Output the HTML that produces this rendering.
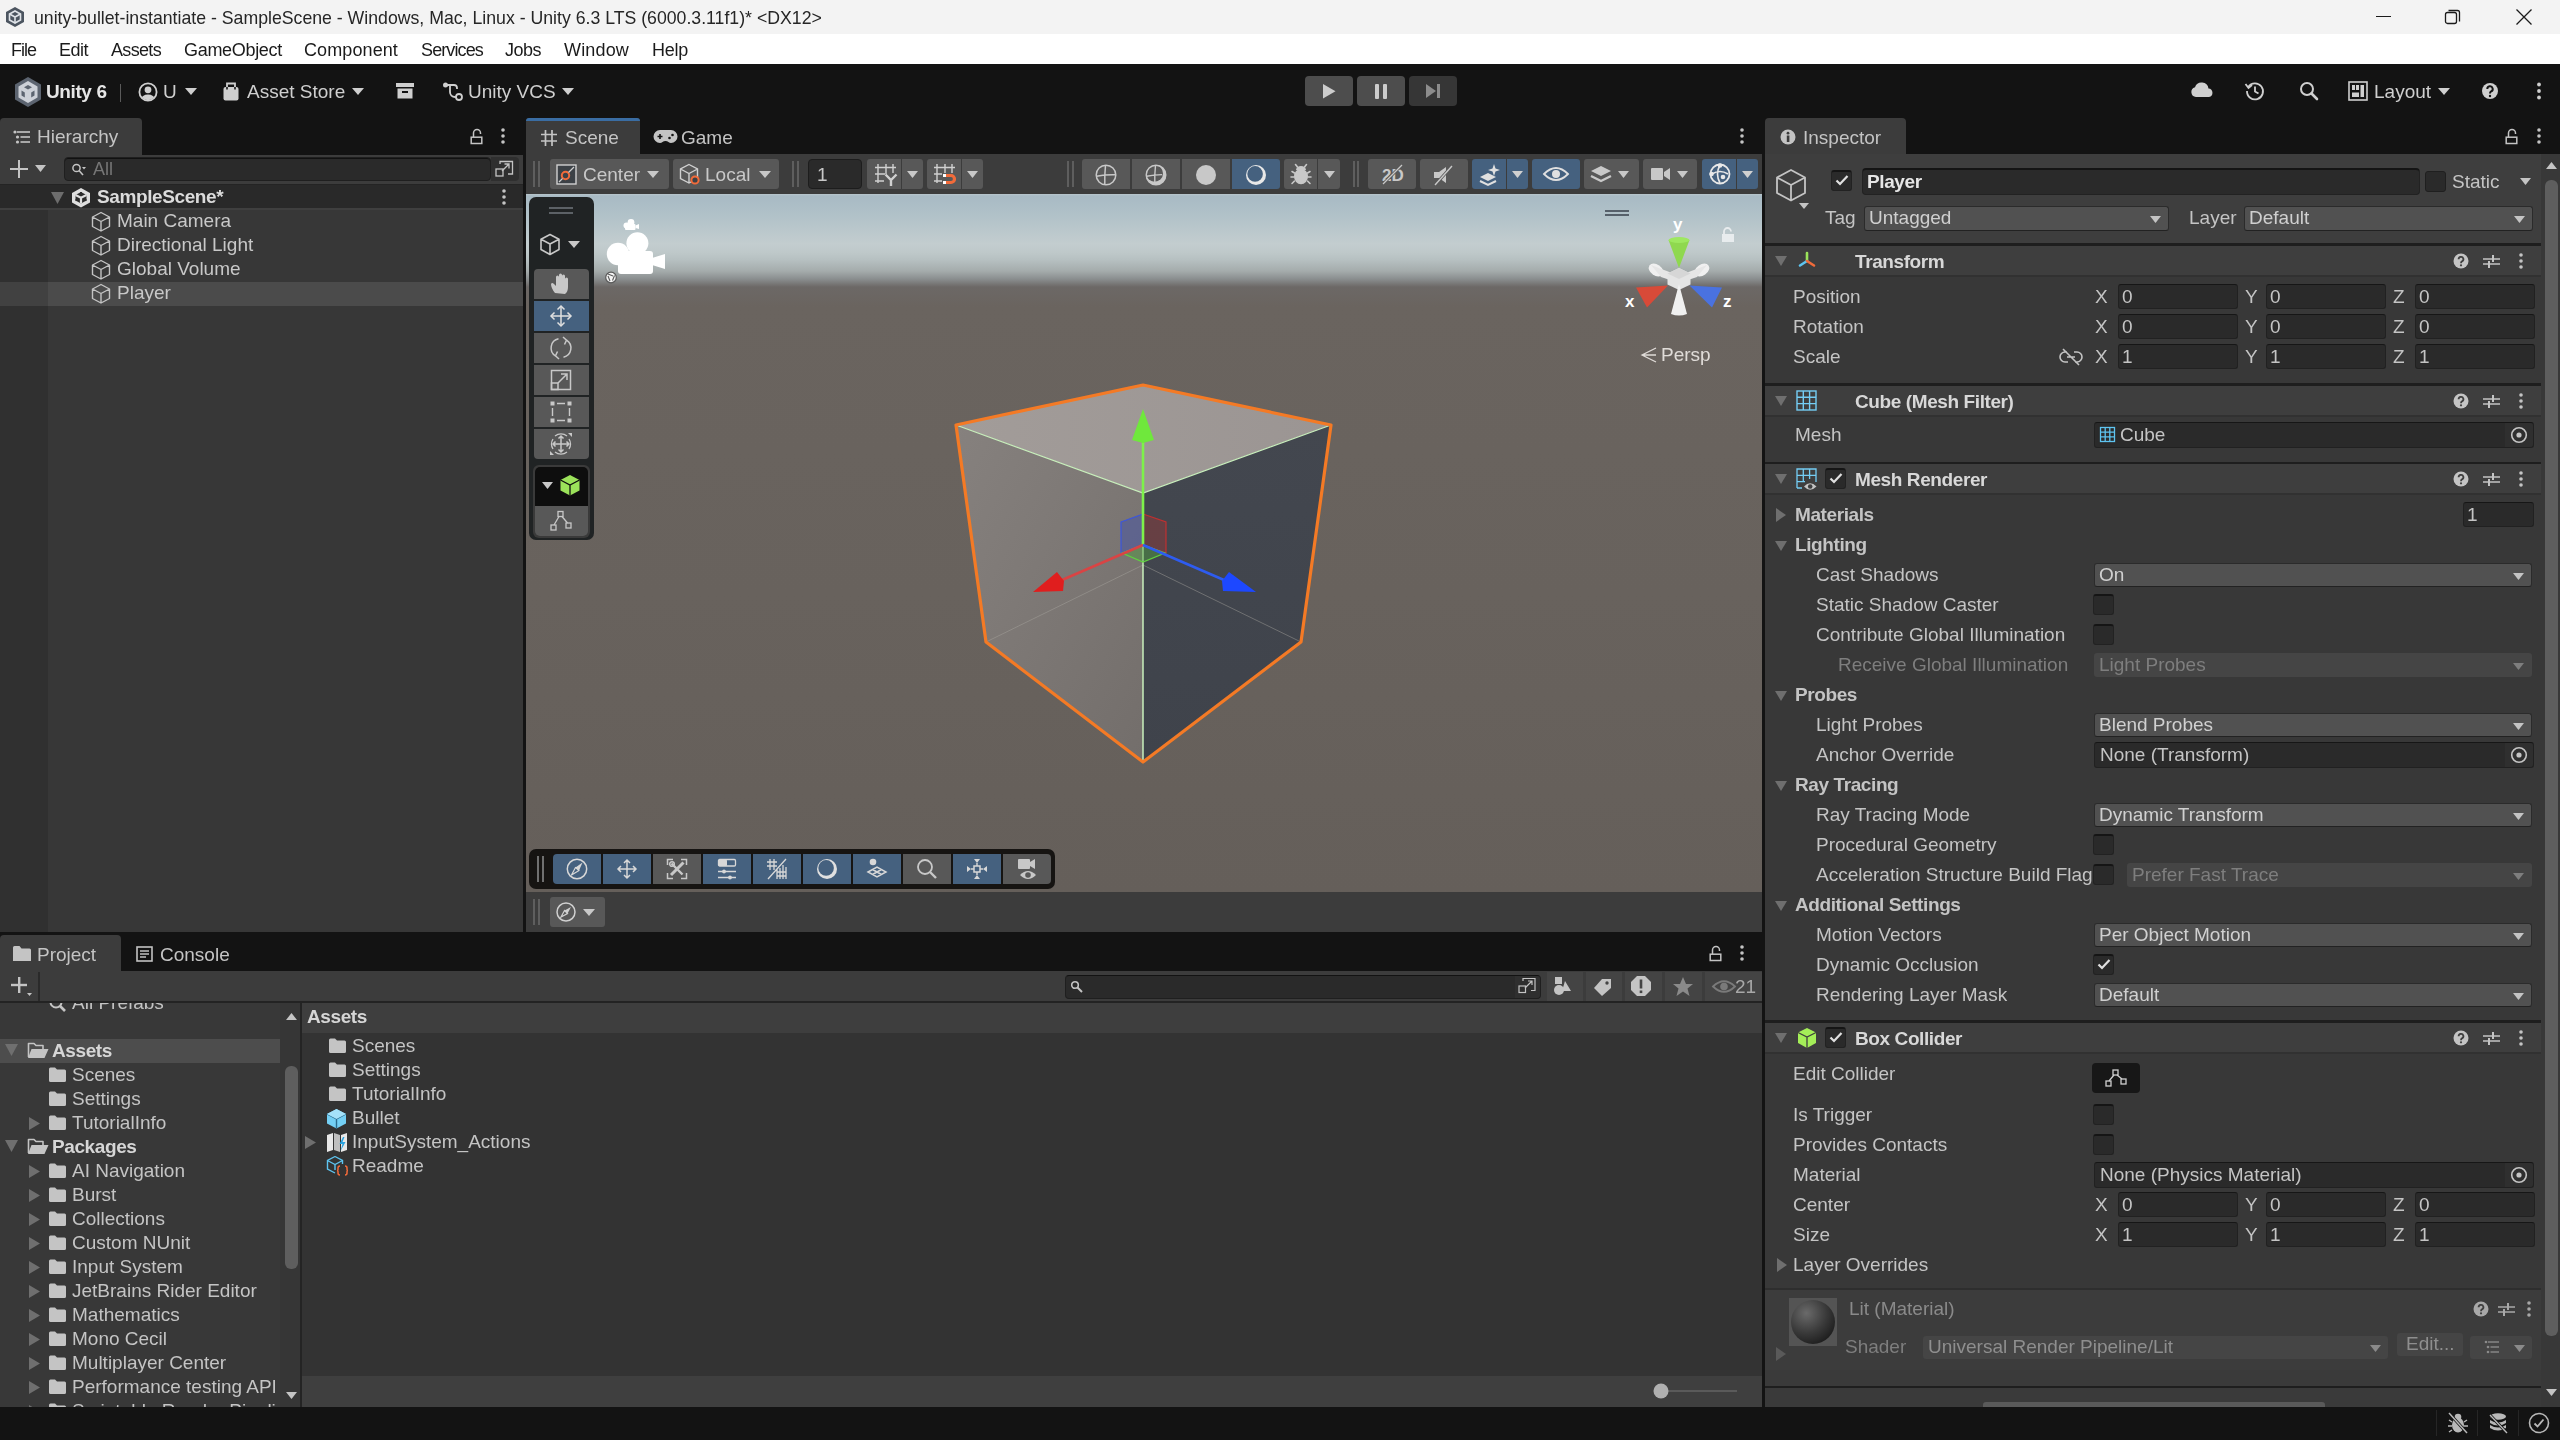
<!DOCTYPE html>
<html><head><meta charset="utf-8"><style>
html,body{margin:0;padding:0;width:2560px;height:1440px;overflow:hidden;background:#131313;}
body{position:relative;font-family:"Liberation Sans", sans-serif;}
.t{position:absolute;white-space:nowrap;will-change:transform;}
svg{overflow:visible}
</style></head><body>
<div style="position:absolute;left:0px;top:0px;width:2560px;height:34px;background:#f3f3f3;"></div>
<svg style="position:absolute;left:4px;top:6px;" width="22" height="22" viewBox="0 0 22 22"><path d="M11 1 L20 6 L20 16 L11 21 L2 16 L2 6 Z" fill="#4c5560"/><path d="M11 5 L16.5 8 L16.5 14 L11 17 L5.5 14 L5.5 8 Z" fill="none" stroke="#dfe3e8" stroke-width="1.6"/><path d="M11 11 L11 17 M11 11 L5.5 8 M11 11 L16.5 8" stroke="#dfe3e8" stroke-width="1.6"/></svg>
<div class="t" style="left:34px;top:6.0px;font-size:17.7px;line-height:24px;color:#262626;">unity-bullet-instantiate - SampleScene - Windows, Mac, Linux - Unity 6.3 LTS (6000.3.11f1)* &lt;DX12&gt;</div>
<div style="position:absolute;left:2376px;top:16px;width:15px;height:1px;background:#1b1b1b;"></div>
<svg style="position:absolute;left:2444px;top:8px;" width="18" height="18" viewBox="0 0 18 18"><rect x="1.5" y="4.5" width="11" height="11" rx="2" fill="none" stroke="#1b1b1b" stroke-width="1.3"/><path d="M4.5 2.5 H13.5 a2 2 0 0 1 2 2 V13.5" fill="none" stroke="#1b1b1b" stroke-width="1.3"/></svg>
<svg style="position:absolute;left:2515px;top:8px;" width="18" height="18" viewBox="0 0 18 18"><path d="M1.5 1.5 L16.5 16.5 M16.5 1.5 L1.5 16.5" stroke="#1b1b1b" stroke-width="1.3"/></svg>
<div style="position:absolute;left:0px;top:34px;width:2560px;height:30px;background:#ffffff;"></div>
<div class="t" style="left:11px;top:38.0px;font-size:18px;line-height:24px;color:#1b1b1b;letter-spacing:-1.00px">File</div>
<div class="t" style="left:59px;top:38.0px;font-size:18px;line-height:24px;color:#1b1b1b;letter-spacing:-0.50px">Edit</div>
<div class="t" style="left:111px;top:38.0px;font-size:18px;line-height:24px;color:#1b1b1b;letter-spacing:-0.67px">Assets</div>
<div class="t" style="left:184px;top:38.0px;font-size:18px;line-height:24px;color:#1b1b1b;letter-spacing:-0.31px">GameObject</div>
<div class="t" style="left:304px;top:38.0px;font-size:18px;line-height:24px;color:#1b1b1b;letter-spacing:0.10px">Component</div>
<div class="t" style="left:421px;top:38.0px;font-size:18px;line-height:24px;color:#1b1b1b;letter-spacing:-0.88px">Services</div>
<div class="t" style="left:505px;top:38.0px;font-size:18px;line-height:24px;color:#1b1b1b;letter-spacing:-0.51px">Jobs</div>
<div class="t" style="left:564px;top:38.0px;font-size:18px;line-height:24px;color:#1b1b1b;letter-spacing:0.16px">Window</div>
<div class="t" style="left:652px;top:38.0px;font-size:18px;line-height:24px;color:#1b1b1b;letter-spacing:-0.26px">Help</div>
<div style="position:absolute;left:0px;top:64px;width:2560px;height:54px;background:#131313;"></div>
<svg style="position:absolute;left:13px;top:76px;" width="30" height="32" viewBox="0 0 30 32"><path d="M15 1 L28 8.5 L28 23.5 L15 31 L2 23.5 L2 8.5 Z" fill="#5c6470"/><path d="M15 5 L24.5 10.5 L24.5 21.5 L15 27 L5.5 21.5 L5.5 10.5 Z" fill="#cdd1d8"/><polygon points="15,9 19,11.3 15,13.6 11,11.3" fill="#5c6470"/><polygon points="8.5,14.5 11.8,16.4 11.8,21.5 8.5,19.6" fill="#5c6470"/><polygon points="21.5,14.5 18.2,16.4 18.2,21.5 21.5,19.6" fill="#5c6470"/></svg>
<div class="t" style="left:46px;top:80.0px;font-size:19px;line-height:24px;color:#e6e6e6;font-weight:bold;letter-spacing:-0.4px;">Unity 6</div>
<div style="position:absolute;left:120px;top:84px;width:1px;height:18px;background:#5a5a5a;"></div>
<svg style="position:absolute;left:138px;top:82px;" width="20" height="20" viewBox="0 0 20 20"><defs><clipPath id="acc"><circle cx="10" cy="10" r="8.2"/></clipPath></defs><circle cx="10" cy="10" r="8.6" fill="none" stroke="#cfcfcf" stroke-width="1.8"/><circle cx="10" cy="7.8" r="3.4" fill="#cfcfcf"/><ellipse cx="10" cy="17.5" rx="7" ry="5" fill="#cfcfcf" clip-path="url(#acc)"/></svg>
<div class="t" style="left:163px;top:80.0px;font-size:19px;line-height:24px;color:#cfcfcf;">U</div>
<svg style="position:absolute;left:185.0px;top:87.5px;" width="12" height="7" viewBox="0 0 12 7"><path d="M0 0 L12 0 L6.0 7 Z" fill="#cfcfcf"/></svg>
<svg style="position:absolute;left:222px;top:81px;" width="18" height="20" viewBox="0 0 18 20"><path d="M5 8 V2.5 H13 V8" fill="none" stroke="#cfcfcf" stroke-width="1.8"/><rect x="1.5" y="6" width="15" height="13.5" rx="2" fill="#cfcfcf"/><rect x="4.2" y="6" width="1.6" height="2.5" fill="#131313"/><rect x="12.2" y="6" width="1.6" height="2.5" fill="#131313"/></svg>
<div class="t" style="left:247px;top:80.0px;font-size:19px;line-height:24px;color:#cfcfcf;">Asset Store</div>
<svg style="position:absolute;left:352.0px;top:87.5px;" width="12" height="7" viewBox="0 0 12 7"><path d="M0 0 L12 0 L6.0 7 Z" fill="#cfcfcf"/></svg>
<svg style="position:absolute;left:396px;top:83px;" width="18" height="16" viewBox="0 0 18 16"><rect x="0" y="0" width="18" height="4" fill="#cfcfcf"/><path d="M1.5 5.5 H16.5 V15.5 H1.5 Z" fill="#cfcfcf"/><rect x="6" y="8" width="6" height="2" fill="#131313"/></svg>
<svg style="position:absolute;left:442px;top:81px;" width="22" height="20" viewBox="0 0 22 20"><circle cx="3.5" cy="4" r="2.5" fill="#cfcfcf"/><circle cx="17" cy="16" r="3" fill="none" stroke="#cfcfcf" stroke-width="1.8"/><path d="M3.5 4 H12 M8 4 V11 a5 5 0 0 0 5 5 H14 M12 4 a3 3 0 0 1 3 3 V8" fill="none" stroke="#cfcfcf" stroke-width="1.8"/></svg>
<div class="t" style="left:468px;top:80.0px;font-size:19px;line-height:24px;color:#cfcfcf;">Unity VCS</div>
<svg style="position:absolute;left:562.0px;top:87.5px;" width="12" height="7" viewBox="0 0 12 7"><path d="M0 0 L12 0 L6.0 7 Z" fill="#cfcfcf"/></svg>
<div style="position:absolute;left:1305px;top:76px;width:48px;height:30px;background:#4d4d4d;border-radius:4px"></div>
<svg style="position:absolute;left:1323px;top:84px;" width="13" height="15" viewBox="0 0 13 15"><path d="M0 0 L12.5 7.3 L0 14.6 Z" fill="#cccccc"/></svg>
<div style="position:absolute;left:1357px;top:76px;width:48px;height:30px;background:#4d4d4d;border-radius:4px"></div>
<div style="position:absolute;left:1375px;top:84px;width:4.3px;height:14.5px;background:#cccccc;border-radius:1px"></div>
<div style="position:absolute;left:1383px;top:84px;width:4.3px;height:14.5px;background:#cccccc;border-radius:1px"></div>
<div style="position:absolute;left:1409px;top:76px;width:48px;height:30px;background:#363636;border-radius:4px"></div>
<svg style="position:absolute;left:1425px;top:83px;" width="16" height="16" viewBox="0 0 16 16"><path d="M1 1 L11 8 L1 15 Z" fill="#8c8c8c"/><rect x="12" y="1" width="3" height="14" fill="#8c8c8c"/></svg>
<svg style="position:absolute;left:2190px;top:82px;" width="24" height="16" viewBox="0 0 24 16"><path d="M6 15 a5 5 0 0 1 -1 -9.8 a7 7 0 0 1 13.5 1.3 a4.3 4.3 0 0 1 0.5 8.5 Z" fill="#cfcfcf"/></svg>
<svg style="position:absolute;left:2245px;top:81px;" width="20" height="20" viewBox="0 0 20 20"><path d="M3.3 6 A8 8 0 1 1 2 10" fill="none" stroke="#cfcfcf" stroke-width="1.8"/><path d="M0.5 3 L3.5 7 L7 4" fill="none" stroke="#cfcfcf" stroke-width="1.8"/><path d="M10 5.5 V10.5 L13.5 12.5" fill="none" stroke="#cfcfcf" stroke-width="1.8"/></svg>
<svg style="position:absolute;left:2299px;top:81px;" width="20" height="20" viewBox="0 0 20 20"><circle cx="8" cy="8" r="6" fill="none" stroke="#cfcfcf" stroke-width="2"/><path d="M12.5 12.5 L18 18" stroke="#cfcfcf" stroke-width="2.6" stroke-linecap="round"/></svg>
<svg style="position:absolute;left:2348px;top:81px;" width="20" height="20" viewBox="0 0 20 20"><rect x="1" y="1" width="18" height="18" fill="none" stroke="#cfcfcf" stroke-width="1.6"/><rect x="4" y="4" width="3" height="5" fill="#cfcfcf"/><rect x="8" y="4" width="3" height="5" fill="#cfcfcf"/><rect x="12.5" y="4" width="3.5" height="12" fill="#cfcfcf"/><rect x="4" y="11.5" width="7" height="4.5" fill="#cfcfcf"/></svg>
<div class="t" style="left:2374px;top:80.0px;font-size:19px;line-height:24px;color:#cfcfcf;">Layout</div>
<svg style="position:absolute;left:2438.0px;top:87.5px;" width="12" height="7" viewBox="0 0 12 7"><path d="M0 0 L12 0 L6.0 7 Z" fill="#cfcfcf"/></svg>
<svg style="position:absolute;left:2481px;top:82px;" width="18" height="18" viewBox="0 0 18 18"><circle cx="9" cy="9" r="8" fill="#cfcfcf"/><path d="M6.3 7 a2.7 2.7 0 1 1 3.8 2.4 c-0.9 0.5 -1.1 1 -1.1 2" fill="none" stroke="#131313" stroke-width="2"/><circle cx="9" cy="14" r="1.2" fill="#131313"/></svg>
<svg style="position:absolute;left:2535px;top:79px;" width="8" height="24" viewBox="0 0 8 24"><circle cx="4" cy="5.5" r="1.9" fill="#cfcfcf"/><circle cx="4" cy="12" r="1.9" fill="#cfcfcf"/><circle cx="4" cy="18.5" r="1.9" fill="#cfcfcf"/></svg>
<div style="position:absolute;left:0px;top:118px;width:2560px;height:37px;background:#131313;"></div>
<div style="position:absolute;left:0px;top:118px;width:142px;height:37px;background:#3c3c3c;border-radius:4px 4px 0 0"></div>
<svg style="position:absolute;left:13px;top:130px;" width="18" height="14" viewBox="0 0 18 14"><circle cx="2" cy="2" r="1.6" fill="#c4c4c4"/><circle cx="4.5" cy="7" r="1.6" fill="#c4c4c4"/><circle cx="4.5" cy="12" r="1.6" fill="#c4c4c4"/><rect x="4" y="1.2" width="13" height="1.6" fill="#c4c4c4"/><rect x="7.5" y="6.2" width="9.5" height="1.6" fill="#c4c4c4"/><rect x="7.5" y="11.2" width="9.5" height="1.6" fill="#c4c4c4"/></svg>
<div class="t" style="left:37px;top:125.0px;font-size:19px;line-height:24px;color:#c4c4c4;">Hierarchy</div>
<svg style="position:absolute;left:469px;top:128px;" width="16" height="17" viewBox="0 0 16 17"><path d="M4.5 9 V5 a3.5 3.5 0 0 1 7 0 V6" fill="none" stroke="#c4c4c4" stroke-width="1.5"/><rect x="2.2" y="9.2" width="10.6" height="6.3" fill="none" stroke="#c4c4c4" stroke-width="1.5"/></svg>
<svg style="position:absolute;left:499px;top:124px;" width="8" height="24" viewBox="0 0 8 24"><circle cx="4" cy="6" r="1.8" fill="#c4c4c4"/><circle cx="4" cy="12" r="1.8" fill="#c4c4c4"/><circle cx="4" cy="18" r="1.8" fill="#c4c4c4"/></svg>
<div style="position:absolute;left:0px;top:155px;width:523px;height:777px;background:#373737;"></div>
<div style="position:absolute;left:0px;top:210px;width:48px;height:722px;background:#303030;"></div>
<div style="position:absolute;left:0px;top:155px;width:523px;height:29px;background:#3c3c3c;"></div>
<div style="position:absolute;left:0px;top:184px;width:523px;height:1px;background:#242424;"></div>
<svg style="position:absolute;left:9px;top:159px;" width="20" height="20" viewBox="0 0 20 20"><rect x="9" y="1" width="2" height="18" fill="#c4c4c4"/><rect x="1" y="9" width="18" height="2" fill="#c4c4c4"/></svg>
<svg style="position:absolute;left:34.5px;top:164.5px;" width="11" height="7" viewBox="0 0 11 7"><path d="M0 0 L11 0 L5.5 7 Z" fill="#c4c4c4"/></svg>
<div style="position:absolute;left:64px;top:157px;width:427px;height:24px;background:#2a2a2a;border-radius:4px;box-shadow:inset 0 1px 0 #111;border:1px solid #1f1f1f;box-sizing:border-box"></div>
<svg style="position:absolute;left:71px;top:162px;" width="16" height="16" viewBox="0 0 16 16"><circle cx="5.5" cy="6" r="3.6" fill="none" stroke="#c4c4c4" stroke-width="1.5"/><path d="M8 8.5 L12 13" stroke="#c4c4c4" stroke-width="1.6"/><path d="M11 5 L15 5 L13 7.5 Z" fill="#c4c4c4"/></svg>
<div class="t" style="left:93px;top:157.0px;font-size:18px;line-height:24px;color:#767676;">All</div>
<div style="position:absolute;left:491px;top:157px;width:28px;height:24px;background:#2f2f2f;border-radius:0 4px 4px 0"></div>
<svg style="position:absolute;left:495px;top:160px;" width="20" height="18" viewBox="0 0 20 18"><rect x="1" y="9" width="7" height="7" fill="none" stroke="#c4c4c4" stroke-width="1.3"/><path d="M5 4 V1.5 H17.5 V14 H13" fill="none" stroke="#c4c4c4" stroke-width="1.3"/><path d="M7 11 L14 4 M9.5 4 H14 V8.5" fill="none" stroke="#c4c4c4" stroke-width="1.3"/></svg>
<div style="position:absolute;left:0px;top:185px;width:523px;height:23px;background:#292929;"></div>
<div style="position:absolute;left:0px;top:208px;width:523px;height:2px;background:#3f3f3f;"></div>
<svg style="position:absolute;left:51px;top:192px;" width="13" height="12" viewBox="0 0 13 12"><path d="M0 0 H13 L6.5 12 Z" fill="#6d6d6d"/></svg>
<svg style="position:absolute;left:71px;top:187px;" width="20" height="21" viewBox="0 0 20 21"><path d="M10 1 L19 6 L19 15.5 L10 20.5 L1 15.5 L1 6 Z" fill="#e0e0e0"/><path d="M10 5 L15.5 8 L15.5 13.5 L10 16.5 L4.5 13.5 L4.5 8 Z" fill="#2d2d2d"/><path d="M10 10.7 V16.5 M10 10.7 L4.5 8 M10 10.7 L15.5 8" stroke="#e0e0e0" stroke-width="2.2"/><path d="M10 5 V8.5 M4.5 13.5 L7.5 11.8 M15.5 13.5 L12.5 11.8" stroke="#2d2d2d" stroke-width="2"/></svg>
<div class="t" style="left:97px;top:185.0px;font-size:19px;line-height:24px;color:#dcdcdc;font-weight:bold;letter-spacing:-0.4px;">SampleScene*</div>
<svg style="position:absolute;left:500px;top:185px;" width="8" height="24" viewBox="0 0 8 24"><circle cx="4" cy="6" r="1.8" fill="#c4c4c4"/><circle cx="4" cy="12" r="1.8" fill="#c4c4c4"/><circle cx="4" cy="18" r="1.8" fill="#c4c4c4"/></svg>
<div style="position:absolute;left:0px;top:282px;width:48px;height:24px;background:#414141;"></div>
<div style="position:absolute;left:48px;top:282px;width:475px;height:24px;background:#4b4b4b;"></div>
<svg style="position:absolute;left:91px;top:211px;" width="20" height="22" viewBox="0 0 20 22"><path d="M10 1.5 L18.5 6 L18.5 15.5 L10 20 L1.5 15.5 L1.5 6 Z M1.5 6 L10 10.5 L18.5 6 M10 10.5 L10 20" fill="none" stroke="#c4c4c4" stroke-width="1.4" stroke-linejoin="round"/></svg>
<div class="t" style="left:117px;top:209.0px;font-size:19px;line-height:24px;color:#c8c8c8;">Main Camera</div>
<svg style="position:absolute;left:91px;top:235px;" width="20" height="22" viewBox="0 0 20 22"><path d="M10 1.5 L18.5 6 L18.5 15.5 L10 20 L1.5 15.5 L1.5 6 Z M1.5 6 L10 10.5 L18.5 6 M10 10.5 L10 20" fill="none" stroke="#c4c4c4" stroke-width="1.4" stroke-linejoin="round"/></svg>
<div class="t" style="left:117px;top:233.0px;font-size:19px;line-height:24px;color:#c8c8c8;">Directional Light</div>
<svg style="position:absolute;left:91px;top:259px;" width="20" height="22" viewBox="0 0 20 22"><path d="M10 1.5 L18.5 6 L18.5 15.5 L10 20 L1.5 15.5 L1.5 6 Z M1.5 6 L10 10.5 L18.5 6 M10 10.5 L10 20" fill="none" stroke="#c4c4c4" stroke-width="1.4" stroke-linejoin="round"/></svg>
<div class="t" style="left:117px;top:257.0px;font-size:19px;line-height:24px;color:#c8c8c8;">Global Volume</div>
<svg style="position:absolute;left:91px;top:283px;" width="20" height="22" viewBox="0 0 20 22"><path d="M10 1.5 L18.5 6 L18.5 15.5 L10 20 L1.5 15.5 L1.5 6 Z M1.5 6 L10 10.5 L18.5 6 M10 10.5 L10 20" fill="none" stroke="#c4c4c4" stroke-width="1.4" stroke-linejoin="round"/></svg>
<div class="t" style="left:117px;top:281.0px;font-size:19px;line-height:24px;color:#c8c8c8;">Player</div>
<div style="position:absolute;left:526px;top:118px;width:114px;height:36px;background:#3c3c3c;border-radius:4px 4px 0 0"></div>
<div style="position:absolute;left:526px;top:118px;width:114px;height:3px;background:#3a6da3;border-radius:4px 4px 0 0"></div>
<svg style="position:absolute;left:540px;top:129px;" width="18" height="18" viewBox="0 0 18 18"><path d="M5.5 1 V17 M12 1 V17 M1 5.5 H17 M1 12 H17" stroke="#c4c4c4" stroke-width="1.7"/></svg>
<div class="t" style="left:565px;top:126.0px;font-size:19px;line-height:24px;color:#c4c4c4;">Scene</div>
<svg style="position:absolute;left:654px;top:129px;" width="23" height="15" viewBox="0 0 23 15"><path d="M6 1 H17 a5.5 5.5 0 0 1 0 13 c-2 0 -3 -2 -5.5 -2 c-2.5 0 -3.5 2 -5.5 2 a5.5 5.5 0 0 1 0 -13 Z" fill="#c4c4c4"/><path d="M3.5 7.5 H8.5 M6 5 V10" stroke="#131313" stroke-width="1.6"/><circle cx="15.5" cy="9" r="1.3" fill="#131313"/><circle cx="18.5" cy="6" r="1.3" fill="#131313"/></svg>
<div class="t" style="left:681px;top:126.0px;font-size:19px;line-height:24px;color:#c4c4c4;">Game</div>
<svg style="position:absolute;left:1738px;top:124px;" width="8" height="24" viewBox="0 0 8 24"><circle cx="4" cy="6" r="1.8" fill="#c4c4c4"/><circle cx="4" cy="12" r="1.8" fill="#c4c4c4"/><circle cx="4" cy="18" r="1.8" fill="#c4c4c4"/></svg>
<div style="position:absolute;left:526px;top:154px;width:1236px;height:778px;background:#3c3c3c;"></div>
<div style="position:absolute;left:523px;top:118px;width:3px;height:814px;background:#131313;"></div>
<div style="position:absolute;left:1762px;top:118px;width:3px;height:814px;background:#131313;"></div>
<div style="position:absolute;left:533px;top:161px;width:1.5px;height:26px;background:#5e5e5e;"></div>
<div style="position:absolute;left:538px;top:161px;width:1.5px;height:26px;background:#5e5e5e;"></div>
<div style="position:absolute;left:550px;top:159px;width:119px;height:30px;background:#585858;border-radius:3px"></div>
<svg style="position:absolute;left:556px;top:164px;" width="21" height="21" viewBox="0 0 21 21"><rect x="1" y="1" width="19" height="19" fill="#3c4146" stroke="#d0d0d0" stroke-width="1.4"/><circle cx="9.5" cy="11.5" r="3.7" fill="none" stroke="#f26b3a" stroke-width="2"/><path d="M3 18 L6.5 14.5 M12.5 8.5 L18 3" stroke="#d0d0d0" stroke-width="1.3"/></svg>
<div class="t" style="left:583px;top:163.0px;font-size:19px;line-height:24px;color:#c8c8c8;">Center</div>
<svg style="position:absolute;left:647.0px;top:170.5px;" width="12" height="7" viewBox="0 0 12 7"><path d="M0 0 L12 0 L6.0 7 Z" fill="#c8c8c8"/></svg>
<div style="position:absolute;left:673px;top:159px;width:106px;height:30px;background:#585858;border-radius:3px"></div>
<svg style="position:absolute;left:679px;top:163px;" width="22" height="22" viewBox="0 0 22 22"><path d="M10 1.5 L18.5 6 L18.5 15.5 L10 20 L1.5 15.5 L1.5 6 Z M1.5 6 L10 10.5 L18.5 6 M10 10.5 L10 20" fill="none" stroke="#d0d0d0" stroke-width="1.4"/><circle cx="16" cy="17" r="3.6" fill="#3c4146" stroke="#f26b3a" stroke-width="2"/></svg>
<div class="t" style="left:705px;top:163.0px;font-size:19px;line-height:24px;color:#c8c8c8;">Local</div>
<svg style="position:absolute;left:759.0px;top:170.5px;" width="12" height="7" viewBox="0 0 12 7"><path d="M0 0 L12 0 L6.0 7 Z" fill="#c8c8c8"/></svg>
<div style="position:absolute;left:792px;top:161px;width:1.5px;height:26px;background:#5e5e5e;"></div>
<div style="position:absolute;left:797px;top:161px;width:1.5px;height:26px;background:#5e5e5e;"></div>
<div style="position:absolute;left:808px;top:159px;width:54px;height:30px;background:#2a2a2a;border-radius:4px;border:1px solid #1d1d1d;box-sizing:border-box"></div>
<div class="t" style="left:817px;top:163.0px;font-size:19px;line-height:24px;color:#c8c8c8;">1</div>
<div style="position:absolute;left:867px;top:159px;width:34px;height:30px;background:#585858;border-radius:3px 0 0 3px"></div>
<div style="position:absolute;left:902px;top:159px;width:21px;height:30px;background:#585858;border-radius:0 3px 3px 0"></div>
<svg style="position:absolute;left:874px;top:164px;" width="24" height="22" viewBox="0 0 24 22"><path d="M4 0 V19 M12 0 V10 M19 0 V9 M1 3.5 H22 M1 10 H11 M1 17 H10" stroke="#d0d0d0" stroke-width="1.4"/><path d="M11.5 10.5 L17 16 L22.5 10.5 M17 16 V22" fill="none" stroke="#d0d0d0" stroke-width="2.4"/></svg>
<svg style="position:absolute;left:906.5px;top:170.5px;" width="11" height="7" viewBox="0 0 11 7"><path d="M0 0 L11 0 L5.5 7 Z" fill="#c8c8c8"/></svg>
<div style="position:absolute;left:927px;top:159px;width:34px;height:30px;background:#585858;border-radius:3px 0 0 3px"></div>
<div style="position:absolute;left:962px;top:159px;width:21px;height:30px;background:#585858;border-radius:0 3px 3px 0"></div>
<svg style="position:absolute;left:934px;top:164px;" width="24" height="22" viewBox="0 0 24 22"><path d="M3 0 V19 M11 0 V9 M18 0 V9 M0 3.5 H21 M0 10 H8 M0 17 H8" stroke="#d0d0d0" stroke-width="1.4"/><path d="M12 11.5 H17 a3.5 3.5 0 0 1 0 7 H12" fill="none" stroke="#f26b3a" stroke-width="3.2"/><rect x="9" y="10" width="3" height="3" fill="#fff"/><rect x="9" y="17" width="3" height="3" fill="#fff"/></svg>
<svg style="position:absolute;left:966.5px;top:170.5px;" width="11" height="7" viewBox="0 0 11 7"><path d="M0 0 L11 0 L5.5 7 Z" fill="#c8c8c8"/></svg>
<div style="position:absolute;left:1067px;top:161px;width:1.5px;height:26px;background:#5e5e5e;"></div>
<div style="position:absolute;left:1072px;top:161px;width:1.5px;height:26px;background:#5e5e5e;"></div>
<div style="position:absolute;left:1082px;top:159px;width:48px;height:30px;background:#585858;border-radius:3px 0 0 3px"></div>
<div style="position:absolute;left:1132px;top:159px;width:48px;height:30px;background:#585858;border-radius:0"></div>
<div style="position:absolute;left:1182px;top:159px;width:48px;height:30px;background:#585858;border-radius:0"></div>
<div style="position:absolute;left:1232px;top:159px;width:48px;height:30px;background:#45617f;border-radius:0 3px 3px 0"></div>
<svg style="position:absolute;left:1095px;top:164px;" width="22" height="22" viewBox="0 0 22 22"><circle cx="11" cy="11" r="9.8" fill="none" stroke="#c8c8c8" stroke-width="1.5"/><path d="M10.5 1.5 Q9.5 11 9.8 20.5 M1.5 12.2 Q11 10.5 20.5 10.8" fill="none" stroke="#c8c8c8" stroke-width="1.5"/></svg>
<svg style="position:absolute;left:1145px;top:164px;" width="22" height="22" viewBox="0 0 22 22"><circle cx="11" cy="11" r="10" fill="#c8c8c8"/><circle cx="9.6" cy="9.4" r="8.4" fill="#585858"/><circle cx="11" cy="11" r="9.8" fill="none" stroke="#c8c8c8" stroke-width="1.4"/><path d="M10.5 1.5 Q9.5 11 9.8 20 M1.5 12.2 Q9 11 17 10.6" fill="none" stroke="#c8c8c8" stroke-width="1.4"/></svg>
<svg style="position:absolute;left:1195px;top:164px;" width="22" height="22" viewBox="0 0 22 22"><circle cx="11" cy="11" r="10" fill="#c8c8c8"/></svg>
<svg style="position:absolute;left:1244px;top:163px;" width="24" height="24" viewBox="0 0 24 24"><circle cx="12" cy="12" r="10" fill="#e8e8e8"/><circle cx="11.1" cy="10.9" r="7.8" fill="#45617f"/></svg>
<div style="position:absolute;left:1284px;top:159px;width:33px;height:30px;background:#585858;border-radius:3px 0 0 3px"></div>
<div style="position:absolute;left:1318px;top:159px;width:22px;height:30px;background:#585858;border-radius:0 3px 3px 0"></div>
<svg style="position:absolute;left:1289px;top:163px;" width="24" height="22" viewBox="0 0 24 22"><ellipse cx="12" cy="13.5" rx="7" ry="7.8" fill="#c8c8c8"/><path d="M7 7 a5 4 0 0 1 10 0 Z" fill="#c8c8c8"/><path d="M8.5 4 L6.5 1.5 M15.5 4 L17.5 1.5 M5.5 10 L3 8.5 M18.5 10 L21 8.5 M5 14 H2 M19 14 H22 M5.5 18 L3 20.5 M18.5 18 L21 20.5" stroke="#c8c8c8" stroke-width="1.6" stroke-linecap="round"/></svg>
<svg style="position:absolute;left:1323.5px;top:170.5px;" width="11" height="7" viewBox="0 0 11 7"><path d="M0 0 L11 0 L5.5 7 Z" fill="#c8c8c8"/></svg>
<div style="position:absolute;left:1353px;top:161px;width:1.5px;height:26px;background:#5e5e5e;"></div>
<div style="position:absolute;left:1357px;top:161px;width:1.5px;height:26px;background:#5e5e5e;"></div>
<div style="position:absolute;left:1368px;top:159px;width:48px;height:30px;background:#585858;border-radius:3px"></div>
<div style="position:absolute;left:1420px;top:159px;width:48px;height:30px;background:#585858;border-radius:3px"></div>
<svg style="position:absolute;left:1381px;top:163px;" width="24" height="22" viewBox="0 0 24 22"><text x="1" y="18" font-family="Liberation Sans" font-size="17" font-weight="bold" fill="#c8c8c8">2D</text><path d="M2 21 L21 2" stroke="#585858" stroke-width="3"/><path d="M2 21 L21 2" stroke="#c8c8c8" stroke-width="1.3"/></svg>
<svg style="position:absolute;left:1432px;top:164px;" width="24" height="22" viewBox="0 0 24 22"><path d="M2 8 H7 L14 3 V19 L7 14 H2 Z" fill="#c8c8c8"/><path d="M3 21 L20 2" stroke="#585858" stroke-width="3"/><path d="M3 21 L20 2" stroke="#c8c8c8" stroke-width="1.4"/></svg>
<div style="position:absolute;left:1472px;top:159px;width:34px;height:30px;background:#45617f;border-radius:3px 0 0 3px"></div>
<div style="position:absolute;left:1507px;top:159px;width:21px;height:30px;background:#45617f;border-radius:0 3px 3px 0"></div>
<svg style="position:absolute;left:1479px;top:162px;" width="22" height="24" viewBox="0 0 22 24"><path d="M1 15 L9 11 L17 15 L9 19 Z" fill="#e0e0e0"/><path d="M1 19 L9 23 L17 19" fill="none" stroke="#e0e0e0" stroke-width="2"/><path d="M15 2 L16.5 6.5 L21 8 L16.5 9.5 L15 14 L13.5 9.5 L9 8 L13.5 6.5 Z" fill="#e0e0e0"/></svg>
<svg style="position:absolute;left:1511.5px;top:170.5px;" width="11" height="7" viewBox="0 0 11 7"><path d="M0 0 L11 0 L5.5 7 Z" fill="#d0d0d0"/></svg>
<div style="position:absolute;left:1532px;top:159px;width:48px;height:30px;background:#45617f;border-radius:3px"></div>
<svg style="position:absolute;left:1543px;top:166px;" width="26" height="16" viewBox="0 0 26 16"><path d="M1 8 Q13 -4 25 8 Q13 20 1 8 Z" fill="none" stroke="#e0e0e0" stroke-width="1.8"/><circle cx="13" cy="8" r="4" fill="#e0e0e0"/></svg>
<div style="position:absolute;left:1584px;top:159px;width:55px;height:30px;background:#585858;border-radius:3px"></div>
<svg style="position:absolute;left:1590px;top:165px;" width="22" height="18" viewBox="0 0 22 18"><path d="M1 6 L11 1 L21 6 L11 11 Z" fill="#c8c8c8"/><path d="M1 11 L11 16 L21 11" fill="none" stroke="#c8c8c8" stroke-width="2.4"/></svg>
<svg style="position:absolute;left:1617.5px;top:170.5px;" width="11" height="7" viewBox="0 0 11 7"><path d="M0 0 L11 0 L5.5 7 Z" fill="#c8c8c8"/></svg>
<div style="position:absolute;left:1643px;top:159px;width:54px;height:30px;background:#585858;border-radius:3px"></div>
<svg style="position:absolute;left:1650px;top:165px;" width="22" height="18" viewBox="0 0 22 18"><rect x="1" y="3" width="12" height="12" rx="1" fill="#c8c8c8"/><path d="M14 7 L20 3 V15 L14 11 Z" fill="#c8c8c8"/></svg>
<svg style="position:absolute;left:1676.5px;top:170.5px;" width="11" height="7" viewBox="0 0 11 7"><path d="M0 0 L11 0 L5.5 7 Z" fill="#c8c8c8"/></svg>
<div style="position:absolute;left:1702px;top:159px;width:34px;height:30px;background:#45617f;border-radius:3px 0 0 3px"></div>
<div style="position:absolute;left:1737px;top:159px;width:21px;height:30px;background:#45617f;border-radius:0 3px 3px 0"></div>
<svg style="position:absolute;left:1708px;top:162px;" width="24" height="24" viewBox="0 0 24 24"><circle cx="12" cy="12" r="9.5" fill="none" stroke="#e8e8e8" stroke-width="1.8"/><path d="M4 12 Q12 7 20 12 M12 3 Q7 12 12 21" fill="none" stroke="#e8e8e8" stroke-width="1.6"/><circle cx="12" cy="3.5" r="2.3" fill="#e8e8e8"/><circle cx="3.5" cy="12" r="2.3" fill="#e8e8e8"/><circle cx="15" cy="15" r="2.3" fill="#e8e8e8"/></svg>
<svg style="position:absolute;left:1741.5px;top:170.5px;" width="11" height="7" viewBox="0 0 11 7"><path d="M0 0 L11 0 L5.5 7 Z" fill="#d0d0d0"/></svg>
<div style="position:absolute;left:526px;top:194px;width:1236px;height:698px;background:linear-gradient(180deg,#b9c6cc 0px,#a8bac4 2px,#b0c1c8 20px,#c3cdcf 50px,#bfc9ca 58px,#b6c0c1 66px,#a5acac 77px,#8a8e8f 85px,#6c6866 93px,#6a645f 113px,#68625d 400px,#655f5a 698px);"></div>
<div style="position:absolute;left:526px;top:892px;width:1236px;height:40px;background:#3c3c3c;"></div>
<div style="position:absolute;left:533px;top:899px;width:1.5px;height:26px;background:#5e5e5e;"></div>
<div style="position:absolute;left:538px;top:899px;width:1.5px;height:26px;background:#5e5e5e;"></div>
<div style="position:absolute;left:550px;top:897px;width:55px;height:30px;background:#585858;border-radius:3px"></div>
<svg style="position:absolute;left:556px;top:902px;" width="20" height="20" viewBox="0 0 20 20"><circle cx="10" cy="10" r="9" fill="none" stroke="#d0d0d0" stroke-width="1.5"/><path d="M15 5 L11.5 11.5 L8.5 8.5 Z" fill="#d0d0d0"/><path d="M5 15 L8.5 8.5 L11.5 11.5 Z" fill="none" stroke="#d0d0d0" stroke-width="1.2"/></svg>
<svg style="position:absolute;left:583.0px;top:908.5px;" width="12" height="7" viewBox="0 0 12 7"><path d="M0 0 L12 0 L6.0 7 Z" fill="#c8c8c8"/></svg>
<svg style="position:absolute;left:526px;top:194px;" width="1236" height="698" viewBox="0 0 1236 698">
    <defs>
      <linearGradient id="lf" x1="0" y1="0" x2="1" y2="1"><stop offset="0" stop-color="#86817e"/><stop offset="1" stop-color="#736e6b"/></linearGradient>
      <linearGradient id="tf" x1="0" y1="0" x2="1" y2="0"><stop offset="0" stop-color="#a29c99"/><stop offset="1" stop-color="#9b9593"/></linearGradient>
      <linearGradient id="rf" x1="0" y1="0" x2="0" y2="1"><stop offset="0" stop-color="#43474f"/><stop offset="1" stop-color="#3f434b"/></linearGradient>
    </defs>
    <polygon points="617,191 805,231 617,299 430,231" fill="url(#tf)"/>
    <polygon points="430,231 617,299 617,568 460,448" fill="url(#lf)"/>
    <polygon points="617,299 805,231 775,448 617,568" fill="url(#rf)"/>
    <polyline points="460,448 617,371 775,448" fill="none" stroke="#a8a6a0" stroke-opacity="0.45" stroke-width="1"/>
    
    <polyline points="430,231 617,299 805,231" fill="none" stroke="#c9f0bd" stroke-width="1.2"/>
    <polyline points="617,299 617,568" fill="none" stroke="#c9f0bd" stroke-width="1.5"/>
    <polygon points="617,191 805,231 775,448 617,568 460,448 430,231" fill="none" stroke="#f47a25" stroke-width="3.2" stroke-linejoin="round"/>
    <!-- plane handles -->
    <polygon points="595,328 617,320 617,351 595,359" fill="#3d4fb0" fill-opacity="0.45" stroke="#3a55e0" stroke-width="1.2"/>
    <polygon points="617,320 640,328 640,359 617,351" fill="#a03838" fill-opacity="0.4" stroke="#c03030" stroke-width="1.2"/>
    <polygon points="596,359 617,351 639,359 617,368" fill="#50a040" fill-opacity="0.45" stroke="#60d040" stroke-width="1.2"/>
    <!-- axes -->
    <line x1="617" y1="351" x2="617" y2="246" stroke="#7df24a" stroke-width="2.6"/>
    <polygon points="617,215 628,246 617,249 606,246" fill="#6fe83c"/>
    <line x1="617" y1="351" x2="536" y2="386" stroke="#d94444" stroke-width="2.6"/>
    <polygon points="507,398 531,378 538,387 537,397" fill="#e01e1e"/>
    <line x1="617" y1="351" x2="698" y2="386" stroke="#2e5cf0" stroke-width="2.6"/>
    <polygon points="730,398 703,378 696,387 697,397" fill="#1d48ff"/>
    </svg>
<svg style="position:absolute;left:600px;top:212px;" width="72" height="76" viewBox="0 0 72 76">
      <g fill="#ffffff">
        <circle cx="31" cy="10.5" r="3.4"/><circle cx="26.5" cy="13.5" r="3"/><rect x="25" y="12" width="10.5" height="6" rx="1"/><path d="M35.5 13.5 L39 12 V17 L35.5 16 Z"/>
        <circle cx="18" cy="42" r="11.2"/><circle cx="37.4" cy="31.3" r="11"/>
        <rect x="18" y="39" width="35" height="23" rx="3"/>
        <path d="M52 46 L65 42 V57 L52 53 Z"/>
      </g>
      <circle cx="11" cy="65.5" r="5.3" fill="#f4f4f4" stroke="#5a5a5a" stroke-width="1.2"/>
      <path d="M8 62 L13 64 M14.5 63.5 L12.5 68.5 M10 69 L8 64" stroke="#5a5a5a" stroke-width="1.1" fill="none"/>
    </svg>
<div style="position:absolute;left:529px;top:197px;width:65px;height:343px;background:#202324;border-radius:7px"></div>
<div style="position:absolute;left:549px;top:207px;width:24px;height:2px;background:#5c6166;"></div>
<div style="position:absolute;left:549px;top:212px;width:24px;height:2px;background:#5c6166;"></div>
<svg style="position:absolute;left:539px;top:233px;" width="22" height="23" viewBox="0 0 22 23"><path d="M11 1.5 L20 6.3 L20 16.5 L11 21.5 L2 16.5 L2 6.3 Z M2 6.3 L11 11 L20 6.3 M11 11 V21.5" fill="none" stroke="#c8c8c8" stroke-width="1.6" stroke-linejoin="round"/></svg>
<svg style="position:absolute;left:568.0px;top:240.5px;" width="12" height="7" viewBox="0 0 12 7"><path d="M0 0 L12 0 L6.0 7 Z" fill="#c8c8c8"/></svg>
<div style="position:absolute;left:534px;top:269px;width:55px;height:30px;background:#585858;border-radius:4px 4px 0 0"></div>
<div style="position:absolute;left:534px;top:301px;width:55px;height:30px;background:#45617f;border-radius:0"></div>
<div style="position:absolute;left:534px;top:333px;width:55px;height:30px;background:#585858;border-radius:0"></div>
<div style="position:absolute;left:534px;top:365px;width:55px;height:30px;background:#585858;border-radius:0"></div>
<div style="position:absolute;left:534px;top:397px;width:55px;height:30px;background:#585858;border-radius:0"></div>
<div style="position:absolute;left:534px;top:429px;width:55px;height:30px;background:#585858;border-radius:0 0 4px 4px"></div>
<svg style="position:absolute;left:549px;top:272px;" width="24" height="24" viewBox="0 0 24 24"><path d="M6 21 Q2 16 2 12 Q3 10 5 12 L7 14 V5 a1.5 1.5 0 0 1 3 0 V11 V3 a1.5 1.5 0 0 1 3 0 V11 V4 a1.5 1.5 0 0 1 3 0 V12 V7 a1.5 1.5 0 0 1 3 0 V15 Q19 20 16 22 Z" fill="#c8c8c8"/></svg>
<svg style="position:absolute;left:549px;top:304px;" width="24" height="24" viewBox="0 0 24 24"><path d="M12 2 V22 M2 12 H22" stroke="#e0e0e0" stroke-width="1.5"/><path d="M8.5 5.5 L12 2 L15.5 5.5 M8.5 18.5 L12 22 L15.5 18.5 M5.5 8.5 L2 12 L5.5 15.5 M18.5 8.5 L22 12 L18.5 15.5" fill="none" stroke="#e0e0e0" stroke-width="1.5"/></svg>
<svg style="position:absolute;left:549px;top:336px;" width="24" height="24" viewBox="0 0 24 24"><path d="M9.5 2.8 A9.3 9.3 0 0 0 6.5 19.8 M14.5 21.2 A9.3 9.3 0 0 0 17.5 4.2" fill="none" stroke="#c8c8c8" stroke-width="1.5"/><path d="M14 1 L17.5 4.2 L15.5 8.5 M10 23 L6.5 19.8 L8.5 15.5" fill="none" stroke="#c8c8c8" stroke-width="1.5"/></svg>
<svg style="position:absolute;left:550px;top:369px;" width="22" height="22" viewBox="0 0 22 22"><rect x="1.5" y="1.5" width="19" height="19" fill="none" stroke="#c8c8c8" stroke-width="1.5"/><rect x="1.5" y="14" width="6.5" height="6.5" fill="none" stroke="#c8c8c8" stroke-width="1.5"/><path d="M8 14 L17 5 M11 5 H17 V11" fill="none" stroke="#c8c8c8" stroke-width="1.5"/></svg>
<svg style="position:absolute;left:550px;top:401px;" width="22" height="22" viewBox="0 0 22 22"><rect x="0.5" y="0.5" width="4" height="4" fill="#c8c8c8"/><rect x="17.5" y="0.5" width="4" height="4" fill="#c8c8c8"/><rect x="0.5" y="17.5" width="4" height="4" fill="#c8c8c8"/><rect x="17.5" y="17.5" width="4" height="4" fill="#c8c8c8"/><path d="M7 2.5 H15 M7 19.5 H15 M2.5 7 V15 M19.5 7 V15" stroke="#c8c8c8" stroke-width="1.4"/></svg>
<svg style="position:absolute;left:549px;top:432px;" width="24" height="24" viewBox="0 0 24 24"><path d="M12 4 V20 M4 12 H20 M9.5 6.5 L12 4 L14.5 6.5 M9.5 17.5 L12 20 L14.5 17.5 M6.5 9.5 L4 12 L6.5 14.5 M17.5 9.5 L20 12 L17.5 14.5" fill="none" stroke="#c8c8c8" stroke-width="1.5"/><path d="M6 4 A9.5 9.5 0 0 1 18 4 M20 7 A9.5 9.5 0 0 1 20 17 M18 20 A9.5 9.5 0 0 1 6 20 M4 17 A9.5 9.5 0 0 1 4 7" fill="none" stroke="#c8c8c8" stroke-width="1.3"/><path d="M19 1 L23 1 L23 5 Z M1 23 L1 19 L5 23 Z" fill="#c8c8c8"/></svg>
<div style="position:absolute;left:533px;top:465px;width:57px;height:73px;background:#3a3a3a;border-radius:6px"></div>
<div style="position:absolute;left:535px;top:467px;width:53px;height:39px;background:#0e0e0e;border-radius:5px 5px 0 0"></div>
<svg style="position:absolute;left:541.5px;top:481.5px;" width="11" height="7" viewBox="0 0 11 7"><path d="M0 0 L11 0 L5.5 7 Z" fill="#c8c8c8"/></svg>
<svg style="position:absolute;left:559px;top:474px;" width="22" height="22" viewBox="0 0 22 22"><path d="M11 1 L20.5 6 L20.5 16.5 L11 21.5 L1.5 16.5 L1.5 6 Z" fill="#9be25a"/><path d="M1.5 6 L11 11 L20.5 6 M11 11 V21.5" fill="none" stroke="#0e0e0e" stroke-width="1.3"/></svg>
<div style="position:absolute;left:535px;top:506px;width:53px;height:30px;background:#585858;border-radius:0 0 5px 5px"></div>
<svg style="position:absolute;left:549px;top:510px;" width="24" height="22" viewBox="0 0 24 22"><rect x="9" y="1.5" width="5" height="5" fill="none" stroke="#c8c8c8" stroke-width="1.3"/><rect x="2" y="15" width="5" height="5" fill="none" stroke="#c8c8c8" stroke-width="1.3"/><rect x="17" y="13" width="5" height="5" fill="none" stroke="#c8c8c8" stroke-width="1.3"/><path d="M5 15 L10 6.5 M13 6.5 L18.5 13" stroke="#c8c8c8" stroke-width="1.3"/></svg>
<div style="position:absolute;left:1605px;top:210px;width:24px;height:2px;background:#56606a;"></div>
<div style="position:absolute;left:1605px;top:214px;width:24px;height:2px;background:#56606a;"></div>
<svg style="position:absolute;left:1618px;top:218px;" width="120" height="110" viewBox="0 0 120 110">
      <text x="55" y="11.5" font-family="Liberation Sans" font-size="17" font-weight="bold" fill="#ffffff">y</text>
      <ellipse cx="38" cy="52" rx="5.5" ry="8" transform="rotate(-55 38 52)" fill="#f0f0f0"/>
      <polygon points="33,47 43,59 55,63 54,55" fill="#e6e6e6"/>
      <ellipse cx="84" cy="52" rx="5.5" ry="8" transform="rotate(55 84 52)" fill="#f0f0f0"/>
      <polygon points="89,47 79,59 67,63 68,55" fill="#e6e6e6"/>
      <polygon points="61,50 72.5,55.5 72.5,66.5 61,72 49.5,66.5 49.5,55.5" fill="#e4e4e4"/>
      <polygon points="49.5,55.5 61,50 72.5,55.5 61,61" fill="#d6d6d6"/>
      <polygon points="50.5,22 71.5,22 61,50" fill="#8fd84f"/>
      <ellipse cx="61" cy="22" rx="10.5" ry="3" fill="#9ee860"/>
      <path d="M53 96 Q61 99 69 96 L61 66 Z" fill="#f0f0f0"/>
      <polygon points="18,69.6 50,67.6 29,89.4" fill="#d84a38"/>
      <polygon points="71.5,67.6 104,69.6 94,89.4" fill="#4a72e0"/>
      <text x="7" y="88.5" font-family="Liberation Sans" font-size="17" font-weight="bold" fill="#ffffff">x</text>
      <text x="105" y="88.5" font-family="Liberation Sans" font-size="17" font-weight="bold" fill="#ffffff">z</text>
    </svg>
<svg style="position:absolute;left:1721px;top:227px;" width="14" height="16" viewBox="0 0 14 16"><path d="M3 7 V4.5 a3.5 3.5 0 0 1 7 0" fill="none" stroke="#e8ecee" stroke-width="1.8"/><rect x="1" y="7" width="12" height="8" fill="#e8ecee"/></svg>
<svg style="position:absolute;left:1640px;top:346px;" width="18" height="18" viewBox="0 0 18 18"><path d="M16 2 L2 9 L16 16 M2 9 H16" fill="none" stroke="#e0dcd8" stroke-width="1.3"/></svg>
<div class="t" style="left:1661px;top:343.0px;font-size:19px;line-height:24px;color:#e0dcd8;">Persp</div>
<div style="position:absolute;left:529px;top:849px;width:526px;height:40px;background:#161412;border-radius:7px"></div>
<div style="position:absolute;left:537px;top:856px;width:1.5px;height:26px;background:#707070;"></div>
<div style="position:absolute;left:542px;top:856px;width:1.5px;height:26px;background:#707070;"></div>
<div style="position:absolute;left:553px;top:854px;width:48px;height:30px;background:#45617f;border-radius:4px 0 0 4px"></div>
<div style="position:absolute;left:603px;top:854px;width:48px;height:30px;background:#45617f;border-radius:0"></div>
<div style="position:absolute;left:653px;top:854px;width:48px;height:30px;background:#585858;border-radius:0"></div>
<div style="position:absolute;left:703px;top:854px;width:48px;height:30px;background:#45617f;border-radius:0"></div>
<div style="position:absolute;left:753px;top:854px;width:48px;height:30px;background:#45617f;border-radius:0"></div>
<div style="position:absolute;left:803px;top:854px;width:48px;height:30px;background:#45617f;border-radius:0"></div>
<div style="position:absolute;left:853px;top:854px;width:48px;height:30px;background:#45617f;border-radius:0"></div>
<div style="position:absolute;left:903px;top:854px;width:48px;height:30px;background:#585858;border-radius:0"></div>
<div style="position:absolute;left:953px;top:854px;width:48px;height:30px;background:#45617f;border-radius:0"></div>
<div style="position:absolute;left:1003px;top:854px;width:48px;height:30px;background:#585858;border-radius:0 4px 4px 0"></div>
<svg style="position:absolute;left:566px;top:858px;" width="22" height="22" viewBox="0 0 22 22"><circle cx="11" cy="11" r="9.7" fill="none" stroke="#d8d8d8" stroke-width="1.5"/><polygon points="16.5,4.5 13,12.5 9.5,9.5" fill="#d8d8d8"/><polygon points="5.5,17 9.5,9.5 13,12.5" fill="none" stroke="#d8d8d8" stroke-width="1.2" stroke-linejoin="round"/></svg>
<svg style="position:absolute;left:616px;top:858px;" width="22" height="22" viewBox="0 0 22 22"><path d="M11 2 V20 M2 11 H20 M8 5 L11 2 L14 5 M8 17 L11 20 L14 17 M5 8 L2 11 L5 14 M17 8 L20 11 L17 14" fill="none" stroke="#d8d8d8" stroke-width="1.5"/></svg>
<svg style="position:absolute;left:666px;top:858px;" width="22" height="22" viewBox="0 0 22 22"><path d="M1.5 7 V1.5 H7 M15 1.5 H20.5 V7 M20.5 15 V20.5 H15 M7 20.5 H1.5 V15" fill="none" stroke="#c8c8c8" stroke-width="1.5"/><path d="M17.5 4.5 L5 17" stroke="#c8c8c8" stroke-width="3"/><path d="M5.5 5.5 L16.5 16.5" stroke="#c8c8c8" stroke-width="2.4"/><circle cx="6" cy="6" r="2.3" fill="none" stroke="#c8c8c8" stroke-width="1.5"/></svg>
<svg style="position:absolute;left:716px;top:858px;" width="22" height="22" viewBox="0 0 22 22"><rect x="2.5" y="1.5" width="17" height="6.5" rx="1.2" fill="none" stroke="#d8d8d8" stroke-width="1.3"/><rect x="2.5" y="1.5" width="8.5" height="6.5" rx="1" fill="#d8d8d8"/><path d="M2 13.5 H20 M2 19.5 H20" stroke="#d8d8d8" stroke-width="1.4"/><circle cx="8" cy="13.5" r="1.9" fill="#d8d8d8"/><circle cx="14" cy="19.5" r="1.9" fill="#d8d8d8"/></svg>
<svg style="position:absolute;left:766px;top:858px;" width="22" height="22" viewBox="0 0 22 22"><path d="M4 1 V12 M8 1 V12 M1 4 H11 M1 8 H11 M2 21 L20 1 M11 11 V21 M14 10 V21 M17 7 V21 M20 9 V21 M11 14 H20 M11 18 H20" stroke="#d8d8d8" stroke-width="1.3"/></svg>
<svg style="position:absolute;left:816px;top:858px;" width="22" height="22" viewBox="0 0 22 22"><circle cx="11" cy="11" r="10" fill="#e0e0e0"/><circle cx="10.1" cy="9.9" r="7.8" fill="#45617f"/></svg>
<svg style="position:absolute;left:866px;top:858px;" width="22" height="22" viewBox="0 0 22 22"><circle cx="7" cy="4" r="3.3" fill="#d8d8d8"/><path d="M2 14 L11 9 L20 14 L11 19 Z M6.5 11.5 L15.5 16.5 M15.5 11.5 L6.5 16.5" fill="none" stroke="#d8d8d8" stroke-width="1.5"/></svg>
<svg style="position:absolute;left:916px;top:858px;" width="22" height="22" viewBox="0 0 22 22"><circle cx="9" cy="9" r="7" fill="none" stroke="#c8c8c8" stroke-width="1.8"/><path d="M14 14 L20 20" stroke="#c8c8c8" stroke-width="2.4"/></svg>
<svg style="position:absolute;left:966px;top:858px;" width="22" height="22" viewBox="0 0 22 22"><path d="M8 1 H14 L11 5 Z M8 21 H14 L11 17 Z M1 8 V14 L5 11 Z M21 8 V14 L17 11 Z" fill="#d8d8d8"/><rect x="8" y="8" width="6" height="6" fill="none" stroke="#d8d8d8" stroke-width="1.5"/><path d="M11 5 V8 M11 14 V17 M5 11 H8 M14 11 H17" stroke="#d8d8d8" stroke-width="1.4"/></svg>
<svg style="position:absolute;left:1016px;top:858px;" width="22" height="22" viewBox="0 0 22 22"><rect x="2" y="1" width="12" height="10" rx="1" fill="#c8c8c8"/><path d="M14 4 L19 1 V11 L14 8 Z" fill="#c8c8c8"/><path d="M4 17 Q12 9 20 17 Q12 25 4 17 Z" fill="#c8c8c8"/><circle cx="12" cy="17" r="2.8" fill="#585858"/></svg>
<div style="position:absolute;left:0px;top:932px;width:1762px;height:39px;background:#131313;"></div>
<div style="position:absolute;left:0px;top:935px;width:121px;height:36px;background:#3c3c3c;border-radius:4px 4px 0 0"></div>
<svg style="position:absolute;left:12px;top:945px;" width="20" height="18" viewBox="0 0 20 18"><path d="M1 2.5 a1.5 1.5 0 0 1 1.5 -1.5 H7.5 L9.5 3.5 H17.5 a1.5 1.5 0 0 1 1.5 1.5 V16 H1 Z" fill="#c4c4c4"/></svg>
<div class="t" style="left:37px;top:943.0px;font-size:19px;line-height:24px;color:#c4c4c4;">Project</div>
<svg style="position:absolute;left:136px;top:946px;" width="17" height="16" viewBox="0 0 17 16"><rect x="1" y="1" width="15" height="14" fill="none" stroke="#c4c4c4" stroke-width="1.6"/><path d="M4 5 H13 M4 8 H13 M4 11 H10" stroke="#c4c4c4" stroke-width="1.5"/></svg>
<div class="t" style="left:160px;top:943.0px;font-size:19px;line-height:24px;color:#c4c4c4;">Console</div>
<svg style="position:absolute;left:1708px;top:945px;" width="16" height="17" viewBox="0 0 16 17"><path d="M4.5 9 V5 a3.5 3.5 0 0 1 7 0 V6" fill="none" stroke="#c4c4c4" stroke-width="1.5"/><rect x="2.2" y="9.2" width="10.6" height="6.3" fill="none" stroke="#c4c4c4" stroke-width="1.5"/></svg>
<svg style="position:absolute;left:1738px;top:941px;" width="8" height="24" viewBox="0 0 8 24"><circle cx="4" cy="6" r="1.8" fill="#c4c4c4"/><circle cx="4" cy="12" r="1.8" fill="#c4c4c4"/><circle cx="4" cy="18" r="1.8" fill="#c4c4c4"/></svg>
<div style="position:absolute;left:0px;top:971px;width:1762px;height:31px;background:#3c3c3c;"></div>
<div style="position:absolute;left:38px;top:972px;width:1.5px;height:30px;background:#2a2a2a;"></div>
<svg style="position:absolute;left:10px;top:976px;" width="22" height="22" viewBox="0 0 22 22"><rect x="8" y="1" width="2.4" height="16" fill="#c4c4c4"/><rect x="1" y="7.8" width="16" height="2.4" fill="#c4c4c4"/><path d="M17 17 H22 L19.5 20 Z" fill="#c4c4c4"/></svg>
<div style="position:absolute;left:1065px;top:975px;width:476px;height:24px;background:#2a2a2a;border-radius:4px;border:1px solid #1f1f1f;border-top-color:#121212;box-sizing:border-box"></div>
<svg style="position:absolute;left:1070px;top:980px;" width="14" height="14" viewBox="0 0 14 14"><circle cx="5" cy="5" r="3.3" fill="none" stroke="#c4c4c4" stroke-width="1.6"/><path d="M7.5 7.5 L12 12" stroke="#c4c4c4" stroke-width="2"/></svg>
<div style="position:absolute;left:1515px;top:976px;width:25px;height:22px;background:#2f2f2f;border-radius:0 3px 3px 0"></div>
<svg style="position:absolute;left:1518px;top:977px;" width="20" height="18" viewBox="0 0 20 18"><rect x="1" y="9" width="6.5" height="6.5" fill="none" stroke="#c4c4c4" stroke-width="1.2"/><path d="M5 4 V1.5 H17 V13.5 H13" fill="none" stroke="#c4c4c4" stroke-width="1.2"/><path d="M7 11 L14 4 M10 4 H14 V8" fill="none" stroke="#c4c4c4" stroke-width="1.2"/></svg>
<div style="position:absolute;left:1547px;top:972px;width:36px;height:30px;background:#444444;"></div>
<div style="position:absolute;left:1586px;top:972px;width:36px;height:30px;background:#444444;"></div>
<div style="position:absolute;left:1625px;top:972px;width:37px;height:30px;background:#444444;"></div>
<div style="position:absolute;left:1665px;top:972px;width:37px;height:30px;background:#444444;"></div>
<div style="position:absolute;left:1705px;top:972px;width:57px;height:30px;background:#444444;"></div>
<svg style="position:absolute;left:1553px;top:976px;" width="20" height="20" viewBox="0 0 20 20"><rect x="2" y="1" width="7" height="7" fill="#c4c4c4"/><circle cx="6" cy="14" r="5" fill="#c4c4c4"/><path d="M12 5 L18 15 H9 Z" fill="#c4c4c4"/></svg>
<svg style="position:absolute;left:1593px;top:978px;" width="20" height="18" viewBox="0 0 20 18"><path d="M9 1 H18 V10 L9 18 L1 10 Z" fill="#c4c4c4" transform="rotate(0)"/><circle cx="14" cy="5" r="1.7" fill="#444"/></svg>
<svg style="position:absolute;left:1630px;top:975px;" width="22" height="22" viewBox="0 0 22 22"><path d="M7 1 H15 L21 7 V15 L15 21 H7 L1 15 V7 Z" fill="#c4c4c4"/><rect x="9.7" y="4.5" width="2.6" height="9" fill="#444"/><rect x="9.7" y="15.5" width="2.6" height="2.6" fill="#444"/></svg>
<svg style="position:absolute;left:1672px;top:976px;" width="22" height="21" viewBox="0 0 22 21"><path d="M11 1 L14 8 L21 8 L15.5 12.5 L17.5 20 L11 15.5 L4.5 20 L6.5 12.5 L1 8 L8 8 Z" fill="#8a8a8a"/></svg>
<svg style="position:absolute;left:1712px;top:979px;" width="24" height="15" viewBox="0 0 24 15"><path d="M1 7.5 Q12 -3 23 7.5 Q12 18 1 7.5 Z" fill="none" stroke="#7a7a7a" stroke-width="1.8"/><circle cx="12" cy="7.5" r="3.8" fill="#7a7a7a"/></svg>
<div class="t" style="left:1735px;top:975.0px;font-size:19px;line-height:24px;color:#a8a8a8;">21</div>
<div style="position:absolute;left:0px;top:1001px;width:1762px;height:2px;background:#232323;"></div>
<div style="position:absolute;left:0px;top:1003px;width:283px;height:404px;background:#383838;"></div>
<div style="position:absolute;left:280px;top:1003px;width:20px;height:404px;background:#363636;"></div>
<div style="position:absolute;left:285px;top:1066px;width:13px;height:203px;background:#5e5e5e;border-radius:6px"></div>
<svg style="position:absolute;left:286px;top:1013px;" width="11" height="7" viewBox="0 0 11 7"><path d="M0 7 L5.5 0 L11 7 Z" fill="#c4c4c4"/></svg>
<svg style="position:absolute;left:286px;top:1392px;" width="11" height="7" viewBox="0 0 11 7"><path d="M0 0 L5.5 7 L11 0 Z" fill="#c4c4c4"/></svg>
<div style="position:absolute;left:300px;top:1003px;width:2px;height:404px;background:#242424;"></div>
<div style="position:absolute;left:0;top:1003px;width:283px;height:14px;overflow:hidden">
<svg style="position:absolute;left:48px;top:-9px;" width="20" height="20" viewBox="0 0 20 20"><circle cx="8" cy="8" r="5.5" fill="none" stroke="#c4c4c4" stroke-width="2"/><path d="M12 12 L17 17" stroke="#c4c4c4" stroke-width="2.6"/></svg>
<div class="t" style="left:72px;top:-12px;font-size:19px;line-height:24px;color:#c4c4c4">All Prefabs</div>
</div>
<div style="position:absolute;left:0px;top:1039px;width:280px;height:24px;background:#4d4d4d;"></div>
<svg style="position:absolute;left:5px;top:1044px;" width="13" height="12" viewBox="0 0 13 12"><path d="M0 0 H13 L6.5 12 Z" fill="#6f6f6f"/></svg>
<svg style="position:absolute;left:27px;top:1041px;" width="22" height="19" viewBox="0 0 22 19"><path d="M1.5 16 V2.5 H7 L9 4.5 H16 V8" fill="none" stroke="#c4c4c4" stroke-width="1.6" stroke-linejoin="round"/><path d="M4.5 8 H21.5 L17.5 17 H1 Z" fill="#c4c4c4"/></svg>
<div class="t" style="left:52px;top:1039.0px;font-size:19px;line-height:24px;color:#d6d6d6;font-weight:bold;letter-spacing:-0.4px;">Assets</div>
<svg style="position:absolute;left:48px;top:1066px;" width="19" height="18" viewBox="0 0 19 18"><path d="M1 3 a1.5 1.5 0 0 1 1.5 -1.5 H7 L9 3.5 H16.5 a1.5 1.5 0 0 1 1.5 1.5 V14.5 a1.5 1.5 0 0 1 -1.5 1.5 H2.5 a1.5 1.5 0 0 1 -1.5 -1.5 Z" fill="#c4c4c4"/></svg>
<div class="t" style="left:72px;top:1062.5px;font-size:19px;line-height:24px;color:#c4c4c4;">Scenes</div>
<svg style="position:absolute;left:48px;top:1090px;" width="19" height="18" viewBox="0 0 19 18"><path d="M1 3 a1.5 1.5 0 0 1 1.5 -1.5 H7 L9 3.5 H16.5 a1.5 1.5 0 0 1 1.5 1.5 V14.5 a1.5 1.5 0 0 1 -1.5 1.5 H2.5 a1.5 1.5 0 0 1 -1.5 -1.5 Z" fill="#c4c4c4"/></svg>
<div class="t" style="left:72px;top:1086.5px;font-size:19px;line-height:24px;color:#c4c4c4;">Settings</div>
<svg style="position:absolute;left:28.5px;top:1116.5px;" width="11" height="13" viewBox="0 0 11 13"><path d="M0 0 L11 6.5 L0 13 Z" fill="#6f6f6f"/></svg>
<svg style="position:absolute;left:48px;top:1114px;" width="19" height="18" viewBox="0 0 19 18"><path d="M1 3 a1.5 1.5 0 0 1 1.5 -1.5 H7 L9 3.5 H16.5 a1.5 1.5 0 0 1 1.5 1.5 V14.5 a1.5 1.5 0 0 1 -1.5 1.5 H2.5 a1.5 1.5 0 0 1 -1.5 -1.5 Z" fill="#c4c4c4"/></svg>
<div class="t" style="left:72px;top:1110.5px;font-size:19px;line-height:24px;color:#c4c4c4;">TutorialInfo</div>
<svg style="position:absolute;left:5px;top:1140px;" width="13" height="12" viewBox="0 0 13 12"><path d="M0 0 H13 L6.5 12 Z" fill="#6f6f6f"/></svg>
<svg style="position:absolute;left:27px;top:1137px;" width="22" height="19" viewBox="0 0 22 19"><path d="M1.5 16 V2.5 H7 L9 4.5 H16 V8" fill="none" stroke="#c4c4c4" stroke-width="1.6" stroke-linejoin="round"/><path d="M4.5 8 H21.5 L17.5 17 H1 Z" fill="#c4c4c4"/></svg>
<div class="t" style="left:52px;top:1135.0px;font-size:19px;line-height:24px;color:#d6d6d6;font-weight:bold;letter-spacing:-0.4px;">Packages</div>
<div style="position:absolute;left:0;top:1003px;width:283px;height:404px;overflow:hidden">
<svg style="position:absolute;left:28.5px;top:161.5px;" width="11" height="13" viewBox="0 0 11 13"><path d="M0 0 L11 6.5 L0 13 Z" fill="#6f6f6f"/></svg>
<svg style="position:absolute;left:48px;top:159px;" width="19" height="18" viewBox="0 0 19 18"><path d="M1 3 a1.5 1.5 0 0 1 1.5 -1.5 H7 L9 3.5 H16.5 a1.5 1.5 0 0 1 1.5 1.5 V14.5 a1.5 1.5 0 0 1 -1.5 1.5 H2.5 a1.5 1.5 0 0 1 -1.5 -1.5 Z" fill="#c4c4c4"/></svg>
<div class="t" style="left:72px;top:155.5px;font-size:19px;line-height:24px;color:#c4c4c4">AI Navigation</div>
<svg style="position:absolute;left:28.5px;top:185.5px;" width="11" height="13" viewBox="0 0 11 13"><path d="M0 0 L11 6.5 L0 13 Z" fill="#6f6f6f"/></svg>
<svg style="position:absolute;left:48px;top:183px;" width="19" height="18" viewBox="0 0 19 18"><path d="M1 3 a1.5 1.5 0 0 1 1.5 -1.5 H7 L9 3.5 H16.5 a1.5 1.5 0 0 1 1.5 1.5 V14.5 a1.5 1.5 0 0 1 -1.5 1.5 H2.5 a1.5 1.5 0 0 1 -1.5 -1.5 Z" fill="#c4c4c4"/></svg>
<div class="t" style="left:72px;top:179.5px;font-size:19px;line-height:24px;color:#c4c4c4">Burst</div>
<svg style="position:absolute;left:28.5px;top:209.5px;" width="11" height="13" viewBox="0 0 11 13"><path d="M0 0 L11 6.5 L0 13 Z" fill="#6f6f6f"/></svg>
<svg style="position:absolute;left:48px;top:207px;" width="19" height="18" viewBox="0 0 19 18"><path d="M1 3 a1.5 1.5 0 0 1 1.5 -1.5 H7 L9 3.5 H16.5 a1.5 1.5 0 0 1 1.5 1.5 V14.5 a1.5 1.5 0 0 1 -1.5 1.5 H2.5 a1.5 1.5 0 0 1 -1.5 -1.5 Z" fill="#c4c4c4"/></svg>
<div class="t" style="left:72px;top:203.5px;font-size:19px;line-height:24px;color:#c4c4c4">Collections</div>
<svg style="position:absolute;left:28.5px;top:233.5px;" width="11" height="13" viewBox="0 0 11 13"><path d="M0 0 L11 6.5 L0 13 Z" fill="#6f6f6f"/></svg>
<svg style="position:absolute;left:48px;top:231px;" width="19" height="18" viewBox="0 0 19 18"><path d="M1 3 a1.5 1.5 0 0 1 1.5 -1.5 H7 L9 3.5 H16.5 a1.5 1.5 0 0 1 1.5 1.5 V14.5 a1.5 1.5 0 0 1 -1.5 1.5 H2.5 a1.5 1.5 0 0 1 -1.5 -1.5 Z" fill="#c4c4c4"/></svg>
<div class="t" style="left:72px;top:227.5px;font-size:19px;line-height:24px;color:#c4c4c4">Custom NUnit</div>
<svg style="position:absolute;left:28.5px;top:257.5px;" width="11" height="13" viewBox="0 0 11 13"><path d="M0 0 L11 6.5 L0 13 Z" fill="#6f6f6f"/></svg>
<svg style="position:absolute;left:48px;top:255px;" width="19" height="18" viewBox="0 0 19 18"><path d="M1 3 a1.5 1.5 0 0 1 1.5 -1.5 H7 L9 3.5 H16.5 a1.5 1.5 0 0 1 1.5 1.5 V14.5 a1.5 1.5 0 0 1 -1.5 1.5 H2.5 a1.5 1.5 0 0 1 -1.5 -1.5 Z" fill="#c4c4c4"/></svg>
<div class="t" style="left:72px;top:251.5px;font-size:19px;line-height:24px;color:#c4c4c4">Input System</div>
<svg style="position:absolute;left:28.5px;top:281.5px;" width="11" height="13" viewBox="0 0 11 13"><path d="M0 0 L11 6.5 L0 13 Z" fill="#6f6f6f"/></svg>
<svg style="position:absolute;left:48px;top:279px;" width="19" height="18" viewBox="0 0 19 18"><path d="M1 3 a1.5 1.5 0 0 1 1.5 -1.5 H7 L9 3.5 H16.5 a1.5 1.5 0 0 1 1.5 1.5 V14.5 a1.5 1.5 0 0 1 -1.5 1.5 H2.5 a1.5 1.5 0 0 1 -1.5 -1.5 Z" fill="#c4c4c4"/></svg>
<div class="t" style="left:72px;top:275.5px;font-size:19px;line-height:24px;color:#c4c4c4">JetBrains Rider Editor</div>
<svg style="position:absolute;left:28.5px;top:305.5px;" width="11" height="13" viewBox="0 0 11 13"><path d="M0 0 L11 6.5 L0 13 Z" fill="#6f6f6f"/></svg>
<svg style="position:absolute;left:48px;top:303px;" width="19" height="18" viewBox="0 0 19 18"><path d="M1 3 a1.5 1.5 0 0 1 1.5 -1.5 H7 L9 3.5 H16.5 a1.5 1.5 0 0 1 1.5 1.5 V14.5 a1.5 1.5 0 0 1 -1.5 1.5 H2.5 a1.5 1.5 0 0 1 -1.5 -1.5 Z" fill="#c4c4c4"/></svg>
<div class="t" style="left:72px;top:299.5px;font-size:19px;line-height:24px;color:#c4c4c4">Mathematics</div>
<svg style="position:absolute;left:28.5px;top:329.5px;" width="11" height="13" viewBox="0 0 11 13"><path d="M0 0 L11 6.5 L0 13 Z" fill="#6f6f6f"/></svg>
<svg style="position:absolute;left:48px;top:327px;" width="19" height="18" viewBox="0 0 19 18"><path d="M1 3 a1.5 1.5 0 0 1 1.5 -1.5 H7 L9 3.5 H16.5 a1.5 1.5 0 0 1 1.5 1.5 V14.5 a1.5 1.5 0 0 1 -1.5 1.5 H2.5 a1.5 1.5 0 0 1 -1.5 -1.5 Z" fill="#c4c4c4"/></svg>
<div class="t" style="left:72px;top:323.5px;font-size:19px;line-height:24px;color:#c4c4c4">Mono Cecil</div>
<svg style="position:absolute;left:28.5px;top:353.5px;" width="11" height="13" viewBox="0 0 11 13"><path d="M0 0 L11 6.5 L0 13 Z" fill="#6f6f6f"/></svg>
<svg style="position:absolute;left:48px;top:351px;" width="19" height="18" viewBox="0 0 19 18"><path d="M1 3 a1.5 1.5 0 0 1 1.5 -1.5 H7 L9 3.5 H16.5 a1.5 1.5 0 0 1 1.5 1.5 V14.5 a1.5 1.5 0 0 1 -1.5 1.5 H2.5 a1.5 1.5 0 0 1 -1.5 -1.5 Z" fill="#c4c4c4"/></svg>
<div class="t" style="left:72px;top:347.5px;font-size:19px;line-height:24px;color:#c4c4c4">Multiplayer Center</div>
<svg style="position:absolute;left:28.5px;top:377.5px;" width="11" height="13" viewBox="0 0 11 13"><path d="M0 0 L11 6.5 L0 13 Z" fill="#6f6f6f"/></svg>
<svg style="position:absolute;left:48px;top:375px;" width="19" height="18" viewBox="0 0 19 18"><path d="M1 3 a1.5 1.5 0 0 1 1.5 -1.5 H7 L9 3.5 H16.5 a1.5 1.5 0 0 1 1.5 1.5 V14.5 a1.5 1.5 0 0 1 -1.5 1.5 H2.5 a1.5 1.5 0 0 1 -1.5 -1.5 Z" fill="#c4c4c4"/></svg>
<div class="t" style="left:72px;top:371.5px;font-size:19px;line-height:24px;color:#c4c4c4">Performance testing API</div>
<svg style="position:absolute;left:28.5px;top:401.5px;" width="11" height="13" viewBox="0 0 11 13"><path d="M0 0 L11 6.5 L0 13 Z" fill="#6f6f6f"/></svg>
<svg style="position:absolute;left:48px;top:399px;" width="19" height="18" viewBox="0 0 19 18"><path d="M1 3 a1.5 1.5 0 0 1 1.5 -1.5 H7 L9 3.5 H16.5 a1.5 1.5 0 0 1 1.5 1.5 V14.5 a1.5 1.5 0 0 1 -1.5 1.5 H2.5 a1.5 1.5 0 0 1 -1.5 -1.5 Z" fill="#c4c4c4"/></svg>
<div class="t" style="left:72px;top:395.5px;font-size:19px;line-height:24px;color:#c4c4c4">Scriptable Render Pipeline Core</div>
</div>
<div style="position:absolute;left:302px;top:1003px;width:1460px;height:404px;background:#333333;"></div>
<div style="position:absolute;left:302px;top:1003px;width:1460px;height:30px;background:#3e3e3e;"></div>
<div class="t" style="left:307px;top:1005.0px;font-size:19px;line-height:24px;color:#d6d6d6;font-weight:bold;letter-spacing:-0.4px;">Assets</div>
<svg style="position:absolute;left:328px;top:1037px;" width="19" height="18" viewBox="0 0 19 18"><path d="M1 3 a1.5 1.5 0 0 1 1.5 -1.5 H7 L9 3.5 H16.5 a1.5 1.5 0 0 1 1.5 1.5 V14.5 a1.5 1.5 0 0 1 -1.5 1.5 H2.5 a1.5 1.5 0 0 1 -1.5 -1.5 Z" fill="#c4c4c4"/></svg>
<div class="t" style="left:352px;top:1034.0px;font-size:19px;line-height:24px;color:#c4c4c4;">Scenes</div>
<svg style="position:absolute;left:328px;top:1061px;" width="19" height="18" viewBox="0 0 19 18"><path d="M1 3 a1.5 1.5 0 0 1 1.5 -1.5 H7 L9 3.5 H16.5 a1.5 1.5 0 0 1 1.5 1.5 V14.5 a1.5 1.5 0 0 1 -1.5 1.5 H2.5 a1.5 1.5 0 0 1 -1.5 -1.5 Z" fill="#c4c4c4"/></svg>
<div class="t" style="left:352px;top:1058.0px;font-size:19px;line-height:24px;color:#c4c4c4;">Settings</div>
<svg style="position:absolute;left:328px;top:1085px;" width="19" height="18" viewBox="0 0 19 18"><path d="M1 3 a1.5 1.5 0 0 1 1.5 -1.5 H7 L9 3.5 H16.5 a1.5 1.5 0 0 1 1.5 1.5 V14.5 a1.5 1.5 0 0 1 -1.5 1.5 H2.5 a1.5 1.5 0 0 1 -1.5 -1.5 Z" fill="#c4c4c4"/></svg>
<div class="t" style="left:352px;top:1082.0px;font-size:19px;line-height:24px;color:#c4c4c4;">TutorialInfo</div>
<svg style="position:absolute;left:326px;top:1108px;" width="21" height="21" viewBox="0 0 21 21"><path d="M10.5 1 L20 6 L20 15.5 L10.5 20.5 L1 15.5 L1 6 Z" fill="#74d0f5"/><path d="M1 6 L10.5 11 L20 6 M10.5 11 V20.5" fill="none" stroke="#2b6c8e" stroke-width="1.4"/><path d="M10.5 1 L20 6 L10.5 11 L1 6 Z" fill="#a5e2fa"/></svg>
<div class="t" style="left:352px;top:1106.0px;font-size:19px;line-height:24px;color:#c4c4c4;">Bullet</div>
<svg style="position:absolute;left:304.5px;top:1135.5px;" width="11" height="13" viewBox="0 0 11 13"><path d="M0 0 L11 6.5 L0 13 Z" fill="#6f6f6f"/></svg>
<svg style="position:absolute;left:326px;top:1132px;" width="22" height="21" viewBox="0 0 22 21"><path d="M1 3 L7 1 L7 18 L1 20 Z" fill="#e8e8e8"/><path d="M8 1 L14 3 L14 20 L8 18 Z" fill="#bfbfbf"/><path d="M15 3 L21 1 L21 18 L15 20 Z" fill="#e8e8e8"/><path d="M17 5 L13.5 12 H16.5 L14.5 19 L19.5 10 H16.5 L18.5 5 Z" fill="#29a3e0"/></svg>
<div class="t" style="left:352px;top:1130.0px;font-size:19px;line-height:24px;color:#c4c4c4;">InputSystem_Actions</div>
<svg style="position:absolute;left:326px;top:1155px;" width="24" height="22" viewBox="0 0 24 22"><path d="M9 1.5 L16.5 5.5 L16.5 9 M9 1.5 L1.5 5.5 L1.5 14 L9 18 M1.5 5.5 L9 9.5 L16.5 5.5 M9 9.5 V15" fill="none" stroke="#5ec4f0" stroke-width="1.4"/><path d="M14 11 q-2 0 -2 2 v1.5 q0 1 -1 1 q1 0 1 1 v1.5 q0 2 2 2 M19 11 q2 0 2 2 v1.5 q0 1 1 1 q-1 0 -1 1 v1.5 q0 2 -2 2" fill="none" stroke="#f26b3a" stroke-width="1.5"/></svg>
<div class="t" style="left:352px;top:1154.0px;font-size:19px;line-height:24px;color:#c4c4c4;">Readme</div>
<div style="position:absolute;left:302px;top:1376px;width:1460px;height:31px;background:#3f3f3f;"></div>
<div style="position:absolute;left:1660px;top:1390px;width:77px;height:2px;background:#5a5a5a;"></div>
<svg style="position:absolute;left:1653px;top:1383px;" width="16" height="16" viewBox="0 0 16 16"><circle cx="8" cy="8" r="7.5" fill="#b0b0b0"/></svg>
<div style="position:absolute;left:0px;top:1407px;width:2560px;height:33px;background:#131313;"></div>
<div style="position:absolute;left:2436px;top:1410px;width:1px;height:26px;background:#262626;"></div>
<div style="position:absolute;left:2477px;top:1410px;width:1px;height:26px;background:#262626;"></div>
<div style="position:absolute;left:2518px;top:1410px;width:1px;height:26px;background:#262626;"></div>
<svg style="position:absolute;left:2446px;top:1411px;" width="24" height="24" viewBox="0 0 24 24"><ellipse cx="12" cy="14" rx="6" ry="7.5" fill="#b8b8b8"/><circle cx="12" cy="6" r="3.3" fill="#b8b8b8"/><path d="M3 9 L6 11 M21 9 L18 11 M2 15 H6 M22 15 H18 M3 21 L6 19 M21 21 L18 19" stroke="#b8b8b8" stroke-width="1.5"/><path d="M3 2 L21 22" stroke="#131313" stroke-width="3"/><path d="M3 2 L21 22" stroke="#b8b8b8" stroke-width="1.5"/></svg>
<svg style="position:absolute;left:2487px;top:1412px;" width="22" height="22" viewBox="0 0 22 22"><ellipse cx="11" cy="4.5" rx="8" ry="3.3" fill="#b8b8b8"/><path d="M3 8 q8 5 16 0 v3 q-8 5 -16 0 Z M3 13 q8 5 16 0 v3 q-8 5 -16 0 Z" fill="#b8b8b8"/><path d="M3 3 L20 21" stroke="#131313" stroke-width="3"/><path d="M3 3 L20 21" stroke="#b8b8b8" stroke-width="1.4"/></svg>
<svg style="position:absolute;left:2528px;top:1412px;" width="22" height="22" viewBox="0 0 22 22"><circle cx="11" cy="11" r="9.5" fill="none" stroke="#b8b8b8" stroke-width="1.6"/><path d="M6.5 11.5 L9.5 14.5 L15.5 7.5" fill="none" stroke="#b8b8b8" stroke-width="1.8"/></svg>
<div style="position:absolute;left:1765px;top:118px;width:141px;height:36px;background:#3c3c3c;border-radius:4px 4px 0 0"></div>
<svg style="position:absolute;left:1780px;top:129px;" width="16" height="16" viewBox="0 0 16 16"><circle cx="8" cy="8" r="7.5" fill="#c4c4c4"/><rect x="6.8" y="6.5" width="2.6" height="6.5" fill="#3c3c3c"/><circle cx="8" cy="4.2" r="1.4" fill="#3c3c3c"/></svg>
<div class="t" style="left:1803px;top:126.0px;font-size:19px;line-height:24px;color:#c4c4c4;">Inspector</div>
<svg style="position:absolute;left:2504px;top:128px;" width="16" height="17" viewBox="0 0 16 17"><path d="M4.5 9 V5 a3.5 3.5 0 0 1 7 0 V6" fill="none" stroke="#c4c4c4" stroke-width="1.5"/><rect x="2.2" y="9.2" width="10.6" height="6.3" fill="none" stroke="#c4c4c4" stroke-width="1.5"/></svg>
<svg style="position:absolute;left:2535px;top:124px;" width="8" height="24" viewBox="0 0 8 24"><circle cx="4" cy="6" r="1.8" fill="#c4c4c4"/><circle cx="4" cy="12" r="1.8" fill="#c4c4c4"/><circle cx="4" cy="18" r="1.8" fill="#c4c4c4"/></svg>
<div style="position:absolute;left:1765px;top:154px;width:795px;height:1253px;background:#383838;"></div>
<div style="position:absolute;left:2541px;top:154px;width:19px;height:1253px;background:#383838;"></div>
<svg style="position:absolute;left:2546px;top:162px;" width="11" height="7" viewBox="0 0 11 7"><path d="M0 7 L5.5 0 L11 7 Z" fill="#c4c4c4"/></svg>
<div style="position:absolute;left:2545px;top:180px;width:13px;height:1156px;background:#5e5e5e;border-radius:6px"></div>
<svg style="position:absolute;left:2546px;top:1389px;" width="11" height="7" viewBox="0 0 11 7"><path d="M0 0 L5.5 7 L11 0 Z" fill="#c4c4c4"/></svg>
<div style="position:absolute;left:1765px;top:154px;width:776px;height:89px;background:#3e3e3e;"></div>
<div style="position:absolute;left:1765px;top:243px;width:776px;height:3px;background:#1e1e1e;"></div>
<svg style="position:absolute;left:1775px;top:168px;" width="34" height="42" viewBox="0 0 34 42"><path d="M16 2 L30 9.5 L30 25 L16 32.5 L2 25 L2 9.5 Z M2 9.5 L16 17 L30 9.5 M16 17 L16 32.5" fill="none" stroke="#c4c4c4" stroke-width="1.8" stroke-linejoin="round"/><path d="M24 35 H34 L29 41 Z" fill="#c4c4c4"/></svg>
<div style="position:absolute;left:1831px;top:170px;width:21px;height:21px;background:#2a2a2a;border-radius:3px;border:1px solid #222;border-top:2px solid #151515;box-sizing:border-box"></div>
<svg style="position:absolute;left:1835px;top:174px;" width="14" height="12" viewBox="0 0 14 12"><path d="M1.5 6.5 L5 10 L12.5 2" fill="none" stroke="#e0e0e0" stroke-width="2.2"/></svg>
<div style="position:absolute;left:1862px;top:168px;width:558px;height:27px;background:#2a2a2a;border-radius:4px;border:1px solid #222;border-top:2px solid #141414;box-sizing:border-box"></div>
<div class="t" style="left:1867px;top:170.0px;font-size:19px;line-height:24px;color:#e6e6e6;font-weight:bold;letter-spacing:-0.4px;">Player</div>
<div style="position:absolute;left:2425px;top:171px;width:21px;height:21px;background:#2a2a2a;border-radius:3px;border:1px solid #1f1f1f;box-sizing:border-box"></div>
<div class="t" style="left:2452px;top:170.0px;font-size:19px;line-height:24px;color:#c4c4c4;">Static</div>
<svg style="position:absolute;left:2519.5px;top:177.5px;" width="11" height="7" viewBox="0 0 11 7"><path d="M0 0 L11 0 L5.5 7 Z" fill="#c4c4c4"/></svg>
<div class="t" style="left:1825px;top:206.0px;font-size:19px;line-height:24px;color:#c4c4c4;">Tag</div>
<div style="position:absolute;left:1864px;top:206px;width:305px;height:25px;background:#515151;border-radius:3px;border:1px solid #2b2b2b;border-bottom-color:#222;box-sizing:border-box"></div>
<div class="t" style="left:1869px;top:206.0px;font-size:19px;line-height:24px;color:#d0d0d0;">Untagged</div>
<svg style="position:absolute;left:2149.5px;top:215.5px;" width="11" height="7" viewBox="0 0 11 7"><path d="M0 0 L11 0 L5.5 7 Z" fill="#c4c4c4"/></svg>
<div class="t" style="left:2189px;top:206.0px;font-size:19px;line-height:24px;color:#c4c4c4;">Layer</div>
<div style="position:absolute;left:2244px;top:206px;width:289px;height:25px;background:#515151;border-radius:3px;border:1px solid #2b2b2b;border-bottom-color:#222;box-sizing:border-box"></div>
<div class="t" style="left:2249px;top:206.0px;font-size:19px;line-height:24px;color:#d0d0d0;">Default</div>
<svg style="position:absolute;left:2513.5px;top:215.5px;" width="11" height="7" viewBox="0 0 11 7"><path d="M0 0 L11 0 L5.5 7 Z" fill="#c4c4c4"/></svg>
<div style="position:absolute;left:1765px;top:246px;width:776px;height:29px;background:#3e3e3e;"></div>
<div style="position:absolute;left:1765px;top:275px;width:776px;height:2px;background:#313131;"></div>
<svg style="position:absolute;left:1775px;top:255px;" width="12" height="12" viewBox="0 0 12 12"><path d="M0 1 H12 L6 11 Z" fill="#6f6f6f"/></svg>
<svg style="position:absolute;left:1795px;top:249px;" width="24" height="24" viewBox="0 0 24 24"><path d="M12 4 V12" stroke="#9be25a" stroke-width="2.6" stroke-linecap="round"/><path d="M12 12 L5 16.5" stroke="#5ec4f0" stroke-width="2.6" stroke-linecap="round"/><path d="M12 12 L19 16.5" stroke="#f26b3a" stroke-width="2.6" stroke-linecap="round"/></svg>
<div class="t" style="left:1855px;top:250.0px;font-size:19px;line-height:24px;color:#d8d8d8;font-weight:bold;letter-spacing:-0.4px;">Transform</div>
<svg style="position:absolute;left:2453px;top:253px;" width="16" height="16" viewBox="0 0 16 16"><circle cx="8" cy="8" r="7.5" fill="#c4c4c4"/><path d="M5.6 6.2 a2.4 2.4 0 1 1 3.4 2.2 c-0.8 0.4 -1 0.9 -1 1.8" fill="none" stroke="#3e3e3e" stroke-width="1.8"/><circle cx="8" cy="12.3" r="1.1" fill="#3e3e3e"/></svg>
<svg style="position:absolute;left:2482px;top:252px;" width="19" height="18" viewBox="0 0 19 18"><path d="M1 7 H18 M1 12 H18" stroke="#c4c4c4" stroke-width="1.6"/><rect x="10" y="3" width="2" height="7" fill="#c4c4c4"/><rect x="6" y="9" width="2" height="7" fill="#c4c4c4"/></svg>
<svg style="position:absolute;left:2517px;top:249px;" width="8" height="24" viewBox="0 0 8 24"><circle cx="4" cy="6" r="1.8" fill="#c4c4c4"/><circle cx="4" cy="12" r="1.8" fill="#c4c4c4"/><circle cx="4" cy="18" r="1.8" fill="#c4c4c4"/></svg>
<div class="t" style="left:1793px;top:285.0px;font-size:19px;line-height:24px;color:#c4c4c4;">Position</div>
<div class="t" style="left:2095px;top:285.0px;font-size:19px;line-height:24px;color:#c4c4c4;">X</div>
<div style="position:absolute;left:2118px;top:284px;width:120px;height:25px;background:#2a2a2a;border-radius:3px;border:1px solid #212121;border-top-color:#161616;box-sizing:border-box"></div>
<div class="t" style="left:2122px;top:285.0px;font-size:19px;line-height:24px;color:#c4c4c4;">0</div>
<div class="t" style="left:2245px;top:285.0px;font-size:19px;line-height:24px;color:#c4c4c4;">Y</div>
<div style="position:absolute;left:2266px;top:284px;width:120px;height:25px;background:#2a2a2a;border-radius:3px;border:1px solid #212121;border-top-color:#161616;box-sizing:border-box"></div>
<div class="t" style="left:2270px;top:285.0px;font-size:19px;line-height:24px;color:#c4c4c4;">0</div>
<div class="t" style="left:2393px;top:285.0px;font-size:19px;line-height:24px;color:#c4c4c4;">Z</div>
<div style="position:absolute;left:2415px;top:284px;width:120px;height:25px;background:#2a2a2a;border-radius:3px;border:1px solid #212121;border-top-color:#161616;box-sizing:border-box"></div>
<div class="t" style="left:2419px;top:285.0px;font-size:19px;line-height:24px;color:#c4c4c4;">0</div>
<div class="t" style="left:1793px;top:315.0px;font-size:19px;line-height:24px;color:#c4c4c4;">Rotation</div>
<div class="t" style="left:2095px;top:315.0px;font-size:19px;line-height:24px;color:#c4c4c4;">X</div>
<div style="position:absolute;left:2118px;top:314px;width:120px;height:25px;background:#2a2a2a;border-radius:3px;border:1px solid #212121;border-top-color:#161616;box-sizing:border-box"></div>
<div class="t" style="left:2122px;top:315.0px;font-size:19px;line-height:24px;color:#c4c4c4;">0</div>
<div class="t" style="left:2245px;top:315.0px;font-size:19px;line-height:24px;color:#c4c4c4;">Y</div>
<div style="position:absolute;left:2266px;top:314px;width:120px;height:25px;background:#2a2a2a;border-radius:3px;border:1px solid #212121;border-top-color:#161616;box-sizing:border-box"></div>
<div class="t" style="left:2270px;top:315.0px;font-size:19px;line-height:24px;color:#c4c4c4;">0</div>
<div class="t" style="left:2393px;top:315.0px;font-size:19px;line-height:24px;color:#c4c4c4;">Z</div>
<div style="position:absolute;left:2415px;top:314px;width:120px;height:25px;background:#2a2a2a;border-radius:3px;border:1px solid #212121;border-top-color:#161616;box-sizing:border-box"></div>
<div class="t" style="left:2419px;top:315.0px;font-size:19px;line-height:24px;color:#c4c4c4;">0</div>
<div class="t" style="left:1793px;top:345.0px;font-size:19px;line-height:24px;color:#c4c4c4;">Scale</div>
<div class="t" style="left:2095px;top:345.0px;font-size:19px;line-height:24px;color:#c4c4c4;">X</div>
<div style="position:absolute;left:2118px;top:344px;width:120px;height:25px;background:#2a2a2a;border-radius:3px;border:1px solid #212121;border-top-color:#161616;box-sizing:border-box"></div>
<div class="t" style="left:2122px;top:345.0px;font-size:19px;line-height:24px;color:#c4c4c4;">1</div>
<div class="t" style="left:2245px;top:345.0px;font-size:19px;line-height:24px;color:#c4c4c4;">Y</div>
<div style="position:absolute;left:2266px;top:344px;width:120px;height:25px;background:#2a2a2a;border-radius:3px;border:1px solid #212121;border-top-color:#161616;box-sizing:border-box"></div>
<div class="t" style="left:2270px;top:345.0px;font-size:19px;line-height:24px;color:#c4c4c4;">1</div>
<div class="t" style="left:2393px;top:345.0px;font-size:19px;line-height:24px;color:#c4c4c4;">Z</div>
<div style="position:absolute;left:2415px;top:344px;width:120px;height:25px;background:#2a2a2a;border-radius:3px;border:1px solid #212121;border-top-color:#161616;box-sizing:border-box"></div>
<div class="t" style="left:2419px;top:345.0px;font-size:19px;line-height:24px;color:#c4c4c4;">1</div>
<svg style="position:absolute;left:2060px;top:348px;" width="22" height="18" viewBox="0 0 22 18"><path d="M7 4 H5 a5 5 0 0 0 0 10 H8 M14 4 H17 a5 5 0 0 1 0 10 H15 M7 9 H15 M3 1 L19 17" fill="none" stroke="#c4c4c4" stroke-width="1.6"/></svg>
<div style="position:absolute;left:1765px;top:383px;width:776px;height:3px;background:#1e1e1e;"></div>
<div style="position:absolute;left:1765px;top:386px;width:776px;height:29px;background:#3e3e3e;"></div>
<div style="position:absolute;left:1765px;top:415px;width:776px;height:2px;background:#313131;"></div>
<svg style="position:absolute;left:1775px;top:395px;" width="12" height="12" viewBox="0 0 12 12"><path d="M0 1 H12 L6 11 Z" fill="#6f6f6f"/></svg>
<svg style="position:absolute;left:1795px;top:389px;" width="24" height="24" viewBox="0 0 24 24"><g fill="none" stroke="#74cdf4" stroke-width="1.4"><rect x="2" y="2" width="19" height="19"/><path d="M8.3 2 V21 M14.6 2 V21 M2 8.3 H21 M2 14.6 H21"/></g></svg>
<div class="t" style="left:1855px;top:390.0px;font-size:19px;line-height:24px;color:#d8d8d8;font-weight:bold;letter-spacing:-0.4px;">Cube (Mesh Filter)</div>
<svg style="position:absolute;left:2453px;top:393px;" width="16" height="16" viewBox="0 0 16 16"><circle cx="8" cy="8" r="7.5" fill="#c4c4c4"/><path d="M5.6 6.2 a2.4 2.4 0 1 1 3.4 2.2 c-0.8 0.4 -1 0.9 -1 1.8" fill="none" stroke="#3e3e3e" stroke-width="1.8"/><circle cx="8" cy="12.3" r="1.1" fill="#3e3e3e"/></svg>
<svg style="position:absolute;left:2482px;top:392px;" width="19" height="18" viewBox="0 0 19 18"><path d="M1 7 H18 M1 12 H18" stroke="#c4c4c4" stroke-width="1.6"/><rect x="10" y="3" width="2" height="7" fill="#c4c4c4"/><rect x="6" y="9" width="2" height="7" fill="#c4c4c4"/></svg>
<svg style="position:absolute;left:2517px;top:389px;" width="8" height="24" viewBox="0 0 8 24"><circle cx="4" cy="6" r="1.8" fill="#c4c4c4"/><circle cx="4" cy="12" r="1.8" fill="#c4c4c4"/><circle cx="4" cy="18" r="1.8" fill="#c4c4c4"/></svg>
<div class="t" style="left:1795px;top:423.0px;font-size:19px;line-height:24px;color:#c4c4c4;">Mesh</div>
<div style="position:absolute;left:2094px;top:422px;width:440px;height:26px;background:#2a2a2a;border-radius:3px;border:1px solid #212121;border-top-color:#161616;box-sizing:border-box"></div>
<div style="position:absolute;left:2505px;top:423px;width:28px;height:24px;background:#2f2f2f;border-radius:0 3px 3px 0"></div>
<svg style="position:absolute;left:2510px;top:426px;" width="18" height="18" viewBox="0 0 18 18"><circle cx="9" cy="9" r="7.3" fill="none" stroke="#c4c4c4" stroke-width="1.6"/><circle cx="9" cy="9" r="2.6" fill="#c4c4c4"/></svg>
<svg style="position:absolute;left:2099px;top:426px;" width="17" height="17" viewBox="0 0 17 17"><g fill="none" stroke="#5ec4f0" stroke-width="1.3"><rect x="1.5" y="1.5" width="14" height="14"/><path d="M6.2 1.5 V15.5 M10.8 1.5 V15.5 M1.5 6.2 H15.5 M1.5 10.8 H15.5"/></g></svg>
<div class="t" style="left:2120px;top:423.0px;font-size:19px;line-height:24px;color:#c4c4c4;">Cube</div>
<div style="position:absolute;left:1765px;top:462px;width:776px;height:2px;background:#1e1e1e;"></div>
<div style="position:absolute;left:1765px;top:464px;width:776px;height:29px;background:#3e3e3e;"></div>
<div style="position:absolute;left:1765px;top:493px;width:776px;height:2px;background:#313131;"></div>
<svg style="position:absolute;left:1775px;top:473px;" width="12" height="12" viewBox="0 0 12 12"><path d="M0 1 H12 L6 11 Z" fill="#6f6f6f"/></svg>
<svg style="position:absolute;left:1795px;top:467px;" width="24" height="24" viewBox="0 0 24 24"><g fill="none" stroke="#74cdf4" stroke-width="1.3"><path d="M2 21 V2 H21 V15 M8.3 2 V15 M14.6 2 V12 M2 8.3 H21 M2 14.6 H10 M2 21 H7"/></g><path d="M9 19.5 Q15 13 21.5 19.5 Q15 26 9 19.5 Z" fill="#c4c4c4"/><circle cx="15.2" cy="19.5" r="2.3" fill="#3e3e3e"/></svg>
<div style="position:absolute;left:1825px;top:468px;width:21px;height:21px;background:#2a2a2a;border-radius:3px;border:1px solid #222;border-top:2px solid #151515;box-sizing:border-box"></div>
<svg style="position:absolute;left:1829px;top:472px;" width="14" height="12" viewBox="0 0 14 12"><path d="M1.5 6.5 L5 10 L12.5 2" fill="none" stroke="#e0e0e0" stroke-width="2.2"/></svg>
<div class="t" style="left:1855px;top:468.0px;font-size:19px;line-height:24px;color:#d8d8d8;font-weight:bold;letter-spacing:-0.4px;">Mesh Renderer</div>
<svg style="position:absolute;left:2453px;top:471px;" width="16" height="16" viewBox="0 0 16 16"><circle cx="8" cy="8" r="7.5" fill="#c4c4c4"/><path d="M5.6 6.2 a2.4 2.4 0 1 1 3.4 2.2 c-0.8 0.4 -1 0.9 -1 1.8" fill="none" stroke="#3e3e3e" stroke-width="1.8"/><circle cx="8" cy="12.3" r="1.1" fill="#3e3e3e"/></svg>
<svg style="position:absolute;left:2482px;top:470px;" width="19" height="18" viewBox="0 0 19 18"><path d="M1 7 H18 M1 12 H18" stroke="#c4c4c4" stroke-width="1.6"/><rect x="10" y="3" width="2" height="7" fill="#c4c4c4"/><rect x="6" y="9" width="2" height="7" fill="#c4c4c4"/></svg>
<svg style="position:absolute;left:2517px;top:467px;" width="8" height="24" viewBox="0 0 8 24"><circle cx="4" cy="6" r="1.8" fill="#c4c4c4"/><circle cx="4" cy="12" r="1.8" fill="#c4c4c4"/><circle cx="4" cy="18" r="1.8" fill="#c4c4c4"/></svg>
<svg style="position:absolute;left:1775px;top:508px;" width="12" height="14" viewBox="0 0 12 14"><path d="M1 0 L11 7 L1 14 Z" fill="#6f6f6f"/></svg>
<div class="t" style="left:1795px;top:503.0px;font-size:19px;line-height:24px;color:#c4c4c4;font-weight:bold;letter-spacing:-0.4px;">Materials</div>
<div style="position:absolute;left:2463px;top:502px;width:71px;height:25px;background:#2a2a2a;border-radius:3px;border:1px solid #212121;border-top-color:#161616;box-sizing:border-box"></div>
<div class="t" style="left:2467px;top:503.0px;font-size:19px;line-height:24px;color:#c4c4c4;">1</div>
<svg style="position:absolute;left:1775px;top:540px;" width="12" height="12" viewBox="0 0 12 12"><path d="M0 1 H12 L6 11 Z" fill="#6f6f6f"/></svg>
<div class="t" style="left:1795px;top:533.0px;font-size:19px;line-height:24px;color:#c4c4c4;font-weight:bold;letter-spacing:-0.4px;">Lighting</div>
<div class="t" style="left:1816px;top:563.0px;font-size:19px;line-height:24px;color:#c4c4c4;">Cast Shadows</div>
<div style="position:absolute;left:2094px;top:563px;width:438px;height:24px;background:#515151;border-radius:3px;border:1px solid #2b2b2b;border-bottom-color:#222;box-sizing:border-box"></div>
<div class="t" style="left:2099px;top:563.0px;font-size:19px;line-height:24px;color:#d0d0d0;">On</div>
<svg style="position:absolute;left:2512.5px;top:572.5px;" width="11" height="7" viewBox="0 0 11 7"><path d="M0 0 L11 0 L5.5 7 Z" fill="#c4c4c4"/></svg>
<div class="t" style="left:1816px;top:593.0px;font-size:19px;line-height:24px;color:#c4c4c4;">Static Shadow Caster</div>
<div style="position:absolute;left:2093px;top:594px;width:21px;height:21px;background:#2a2a2a;border-radius:3px;border:1px solid #222;border-top:2px solid #151515;box-sizing:border-box"></div>
<div class="t" style="left:1816px;top:623.0px;font-size:19px;line-height:24px;color:#c4c4c4;">Contribute Global Illumination</div>
<div style="position:absolute;left:2093px;top:624px;width:21px;height:21px;background:#2a2a2a;border-radius:3px;border:1px solid #222;border-top:2px solid #151515;box-sizing:border-box"></div>
<div class="t" style="left:1838px;top:653.0px;font-size:19px;line-height:24px;color:#7e7e7e;">Receive Global Illumination</div>
<div style="position:absolute;left:2094px;top:653px;width:438px;height:24px;background:#454545;border-radius:3px;box-sizing:border-box"></div>
<div class="t" style="left:2099px;top:653.0px;font-size:19px;line-height:24px;color:#7e7e7e;">Light Probes</div>
<svg style="position:absolute;left:2512.5px;top:662.5px;" width="11" height="7" viewBox="0 0 11 7"><path d="M0 0 L11 0 L5.5 7 Z" fill="#7e7e7e"/></svg>
<svg style="position:absolute;left:1775px;top:690px;" width="12" height="12" viewBox="0 0 12 12"><path d="M0 1 H12 L6 11 Z" fill="#6f6f6f"/></svg>
<div class="t" style="left:1795px;top:683.0px;font-size:19px;line-height:24px;color:#c4c4c4;font-weight:bold;letter-spacing:-0.4px;">Probes</div>
<div class="t" style="left:1816px;top:713.0px;font-size:19px;line-height:24px;color:#c4c4c4;">Light Probes</div>
<div style="position:absolute;left:2094px;top:713px;width:438px;height:24px;background:#515151;border-radius:3px;border:1px solid #2b2b2b;border-bottom-color:#222;box-sizing:border-box"></div>
<div class="t" style="left:2099px;top:713.0px;font-size:19px;line-height:24px;color:#d0d0d0;">Blend Probes</div>
<svg style="position:absolute;left:2512.5px;top:722.5px;" width="11" height="7" viewBox="0 0 11 7"><path d="M0 0 L11 0 L5.5 7 Z" fill="#c4c4c4"/></svg>
<div class="t" style="left:1816px;top:743.0px;font-size:19px;line-height:24px;color:#c4c4c4;">Anchor Override</div>
<div style="position:absolute;left:2094px;top:742px;width:440px;height:26px;background:#2a2a2a;border-radius:3px;border:1px solid #212121;border-top-color:#161616;box-sizing:border-box"></div>
<div style="position:absolute;left:2505px;top:743px;width:28px;height:24px;background:#2f2f2f;border-radius:0 3px 3px 0"></div>
<svg style="position:absolute;left:2510px;top:746px;" width="18" height="18" viewBox="0 0 18 18"><circle cx="9" cy="9" r="7.3" fill="none" stroke="#c4c4c4" stroke-width="1.6"/><circle cx="9" cy="9" r="2.6" fill="#c4c4c4"/></svg>
<div class="t" style="left:2100px;top:743.0px;font-size:19px;line-height:24px;color:#c4c4c4;">None (Transform)</div>
<svg style="position:absolute;left:1775px;top:780px;" width="12" height="12" viewBox="0 0 12 12"><path d="M0 1 H12 L6 11 Z" fill="#6f6f6f"/></svg>
<div class="t" style="left:1795px;top:773.0px;font-size:19px;line-height:24px;color:#c4c4c4;font-weight:bold;letter-spacing:-0.4px;">Ray Tracing</div>
<div class="t" style="left:1816px;top:803.0px;font-size:19px;line-height:24px;color:#c4c4c4;">Ray Tracing Mode</div>
<div style="position:absolute;left:2094px;top:803px;width:438px;height:24px;background:#515151;border-radius:3px;border:1px solid #2b2b2b;border-bottom-color:#222;box-sizing:border-box"></div>
<div class="t" style="left:2099px;top:803.0px;font-size:19px;line-height:24px;color:#d0d0d0;">Dynamic Transform</div>
<svg style="position:absolute;left:2512.5px;top:812.5px;" width="11" height="7" viewBox="0 0 11 7"><path d="M0 0 L11 0 L5.5 7 Z" fill="#c4c4c4"/></svg>
<div class="t" style="left:1816px;top:833.0px;font-size:19px;line-height:24px;color:#c4c4c4;">Procedural Geometry</div>
<div style="position:absolute;left:2093px;top:834px;width:21px;height:21px;background:#2a2a2a;border-radius:3px;border:1px solid #222;border-top:2px solid #151515;box-sizing:border-box"></div>
<div class="t" style="left:1816px;top:863.0px;font-size:19px;line-height:24px;color:#c4c4c4;width:277px;overflow:hidden">Acceleration Structure Build Flag</div>
<div style="position:absolute;left:2093px;top:864px;width:21px;height:21px;background:#2a2a2a;border-radius:3px;border:1px solid #222;border-top:2px solid #151515;box-sizing:border-box"></div>
<div style="position:absolute;left:2127px;top:863px;width:405px;height:24px;background:#454545;border-radius:3px;box-sizing:border-box"></div>
<div class="t" style="left:2132px;top:863.0px;font-size:19px;line-height:24px;color:#7e7e7e;">Prefer Fast Trace</div>
<svg style="position:absolute;left:2512.5px;top:872.5px;" width="11" height="7" viewBox="0 0 11 7"><path d="M0 0 L11 0 L5.5 7 Z" fill="#7e7e7e"/></svg>
<svg style="position:absolute;left:1775px;top:900px;" width="12" height="12" viewBox="0 0 12 12"><path d="M0 1 H12 L6 11 Z" fill="#6f6f6f"/></svg>
<div class="t" style="left:1795px;top:893.0px;font-size:19px;line-height:24px;color:#c4c4c4;font-weight:bold;letter-spacing:-0.4px;">Additional Settings</div>
<div class="t" style="left:1816px;top:923.0px;font-size:19px;line-height:24px;color:#c4c4c4;">Motion Vectors</div>
<div style="position:absolute;left:2094px;top:923px;width:438px;height:24px;background:#515151;border-radius:3px;border:1px solid #2b2b2b;border-bottom-color:#222;box-sizing:border-box"></div>
<div class="t" style="left:2099px;top:923.0px;font-size:19px;line-height:24px;color:#d0d0d0;">Per Object Motion</div>
<svg style="position:absolute;left:2512.5px;top:932.5px;" width="11" height="7" viewBox="0 0 11 7"><path d="M0 0 L11 0 L5.5 7 Z" fill="#c4c4c4"/></svg>
<div class="t" style="left:1816px;top:953.0px;font-size:19px;line-height:24px;color:#c4c4c4;">Dynamic Occlusion</div>
<div style="position:absolute;left:2093px;top:954px;width:21px;height:21px;background:#2a2a2a;border-radius:3px;border:1px solid #222;border-top:2px solid #151515;box-sizing:border-box"></div>
<svg style="position:absolute;left:2097px;top:958px;" width="14" height="12" viewBox="0 0 14 12"><path d="M1.5 6.5 L5 10 L12.5 2" fill="none" stroke="#e0e0e0" stroke-width="2.2"/></svg>
<div class="t" style="left:1816px;top:983.0px;font-size:19px;line-height:24px;color:#c4c4c4;">Rendering Layer Mask</div>
<div style="position:absolute;left:2094px;top:983px;width:438px;height:24px;background:#515151;border-radius:3px;border:1px solid #2b2b2b;border-bottom-color:#222;box-sizing:border-box"></div>
<div class="t" style="left:2099px;top:983.0px;font-size:19px;line-height:24px;color:#d0d0d0;">Default</div>
<svg style="position:absolute;left:2512.5px;top:992.5px;" width="11" height="7" viewBox="0 0 11 7"><path d="M0 0 L11 0 L5.5 7 Z" fill="#c4c4c4"/></svg>
<div style="position:absolute;left:1765px;top:1020px;width:776px;height:3px;background:#1e1e1e;"></div>
<div style="position:absolute;left:1765px;top:1023px;width:776px;height:29px;background:#3e3e3e;"></div>
<div style="position:absolute;left:1765px;top:1052px;width:776px;height:2px;background:#313131;"></div>
<svg style="position:absolute;left:1775px;top:1032px;" width="12" height="12" viewBox="0 0 12 12"><path d="M0 1 H12 L6 11 Z" fill="#6f6f6f"/></svg>
<svg style="position:absolute;left:1795px;top:1026px;" width="24" height="24" viewBox="0 0 24 24"><path d="M12 2 L21 6.5 L21 17 L12 22 L3 17 L3 6.5 Z" fill="#a4ee58"/><path d="M3 6.5 L12 11 L21 6.5 M12 11 V22" fill="none" stroke="#3e3e3e" stroke-width="1.3"/></svg>
<div style="position:absolute;left:1825px;top:1027px;width:21px;height:21px;background:#2a2a2a;border-radius:3px;border:1px solid #222;border-top:2px solid #151515;box-sizing:border-box"></div>
<svg style="position:absolute;left:1829px;top:1031px;" width="14" height="12" viewBox="0 0 14 12"><path d="M1.5 6.5 L5 10 L12.5 2" fill="none" stroke="#e0e0e0" stroke-width="2.2"/></svg>
<div class="t" style="left:1855px;top:1027.0px;font-size:19px;line-height:24px;color:#d8d8d8;font-weight:bold;letter-spacing:-0.4px;">Box Collider</div>
<svg style="position:absolute;left:2453px;top:1030px;" width="16" height="16" viewBox="0 0 16 16"><circle cx="8" cy="8" r="7.5" fill="#c4c4c4"/><path d="M5.6 6.2 a2.4 2.4 0 1 1 3.4 2.2 c-0.8 0.4 -1 0.9 -1 1.8" fill="none" stroke="#3e3e3e" stroke-width="1.8"/><circle cx="8" cy="12.3" r="1.1" fill="#3e3e3e"/></svg>
<svg style="position:absolute;left:2482px;top:1029px;" width="19" height="18" viewBox="0 0 19 18"><path d="M1 7 H18 M1 12 H18" stroke="#c4c4c4" stroke-width="1.6"/><rect x="10" y="3" width="2" height="7" fill="#c4c4c4"/><rect x="6" y="9" width="2" height="7" fill="#c4c4c4"/></svg>
<svg style="position:absolute;left:2517px;top:1026px;" width="8" height="24" viewBox="0 0 8 24"><circle cx="4" cy="6" r="1.8" fill="#c4c4c4"/><circle cx="4" cy="12" r="1.8" fill="#c4c4c4"/><circle cx="4" cy="18" r="1.8" fill="#c4c4c4"/></svg>
<div class="t" style="left:1793px;top:1062.0px;font-size:19px;line-height:24px;color:#c4c4c4;">Edit Collider</div>
<div style="position:absolute;left:2092px;top:1063px;width:48px;height:30px;background:#171717;border-radius:4px"></div>
<svg style="position:absolute;left:2104px;top:1068px;" width="24" height="20" viewBox="0 0 24 20"><rect x="9" y="2" width="5" height="5" fill="none" stroke="#d0d0d0" stroke-width="1.3"/><rect x="2" y="13" width="5" height="5" fill="none" stroke="#d0d0d0" stroke-width="1.3"/><rect x="17" y="11" width="5" height="5" fill="none" stroke="#d0d0d0" stroke-width="1.3"/><path d="M5 13 L10 7 M13 7 L18 11" stroke="#d0d0d0" stroke-width="1.3"/></svg>
<div class="t" style="left:1793px;top:1103.0px;font-size:19px;line-height:24px;color:#c4c4c4;">Is Trigger</div>
<div style="position:absolute;left:2093px;top:1104px;width:21px;height:21px;background:#2a2a2a;border-radius:3px;border:1px solid #222;border-top:2px solid #151515;box-sizing:border-box"></div>
<div class="t" style="left:1793px;top:1133.0px;font-size:19px;line-height:24px;color:#c4c4c4;">Provides Contacts</div>
<div style="position:absolute;left:2093px;top:1134px;width:21px;height:21px;background:#2a2a2a;border-radius:3px;border:1px solid #222;border-top:2px solid #151515;box-sizing:border-box"></div>
<div class="t" style="left:1793px;top:1163.0px;font-size:19px;line-height:24px;color:#c4c4c4;">Material</div>
<div style="position:absolute;left:2094px;top:1162px;width:440px;height:26px;background:#2a2a2a;border-radius:3px;border:1px solid #212121;border-top-color:#161616;box-sizing:border-box"></div>
<div style="position:absolute;left:2505px;top:1163px;width:28px;height:24px;background:#2f2f2f;border-radius:0 3px 3px 0"></div>
<svg style="position:absolute;left:2510px;top:1166px;" width="18" height="18" viewBox="0 0 18 18"><circle cx="9" cy="9" r="7.3" fill="none" stroke="#c4c4c4" stroke-width="1.6"/><circle cx="9" cy="9" r="2.6" fill="#c4c4c4"/></svg>
<div class="t" style="left:2100px;top:1163.0px;font-size:19px;line-height:24px;color:#c4c4c4;">None (Physics Material)</div>
<div class="t" style="left:1793px;top:1193.0px;font-size:19px;line-height:24px;color:#c4c4c4;">Center</div>
<div class="t" style="left:2095px;top:1193.0px;font-size:19px;line-height:24px;color:#c4c4c4;">X</div>
<div style="position:absolute;left:2118px;top:1192px;width:120px;height:25px;background:#2a2a2a;border-radius:3px;border:1px solid #212121;border-top-color:#161616;box-sizing:border-box"></div>
<div class="t" style="left:2122px;top:1193.0px;font-size:19px;line-height:24px;color:#c4c4c4;">0</div>
<div class="t" style="left:2245px;top:1193.0px;font-size:19px;line-height:24px;color:#c4c4c4;">Y</div>
<div style="position:absolute;left:2266px;top:1192px;width:120px;height:25px;background:#2a2a2a;border-radius:3px;border:1px solid #212121;border-top-color:#161616;box-sizing:border-box"></div>
<div class="t" style="left:2270px;top:1193.0px;font-size:19px;line-height:24px;color:#c4c4c4;">0</div>
<div class="t" style="left:2393px;top:1193.0px;font-size:19px;line-height:24px;color:#c4c4c4;">Z</div>
<div style="position:absolute;left:2415px;top:1192px;width:120px;height:25px;background:#2a2a2a;border-radius:3px;border:1px solid #212121;border-top-color:#161616;box-sizing:border-box"></div>
<div class="t" style="left:2419px;top:1193.0px;font-size:19px;line-height:24px;color:#c4c4c4;">0</div>
<div class="t" style="left:1793px;top:1223.0px;font-size:19px;line-height:24px;color:#c4c4c4;">Size</div>
<div class="t" style="left:2095px;top:1223.0px;font-size:19px;line-height:24px;color:#c4c4c4;">X</div>
<div style="position:absolute;left:2118px;top:1222px;width:120px;height:25px;background:#2a2a2a;border-radius:3px;border:1px solid #212121;border-top-color:#161616;box-sizing:border-box"></div>
<div class="t" style="left:2122px;top:1223.0px;font-size:19px;line-height:24px;color:#c4c4c4;">1</div>
<div class="t" style="left:2245px;top:1223.0px;font-size:19px;line-height:24px;color:#c4c4c4;">Y</div>
<div style="position:absolute;left:2266px;top:1222px;width:120px;height:25px;background:#2a2a2a;border-radius:3px;border:1px solid #212121;border-top-color:#161616;box-sizing:border-box"></div>
<div class="t" style="left:2270px;top:1223.0px;font-size:19px;line-height:24px;color:#c4c4c4;">1</div>
<div class="t" style="left:2393px;top:1223.0px;font-size:19px;line-height:24px;color:#c4c4c4;">Z</div>
<div style="position:absolute;left:2415px;top:1222px;width:120px;height:25px;background:#2a2a2a;border-radius:3px;border:1px solid #212121;border-top-color:#161616;box-sizing:border-box"></div>
<div class="t" style="left:2419px;top:1223.0px;font-size:19px;line-height:24px;color:#c4c4c4;">1</div>
<svg style="position:absolute;left:1776px;top:1258px;" width="12" height="14" viewBox="0 0 12 14"><path d="M1 0 L11 7 L1 14 Z" fill="#6f6f6f"/></svg>
<div class="t" style="left:1793px;top:1253.0px;font-size:19px;line-height:24px;color:#c4c4c4;">Layer Overrides</div>
<div style="position:absolute;left:1765px;top:1288px;width:776px;height:2px;background:#2e2e2e;"></div>
<div style="position:absolute;left:1765px;top:1290px;width:776px;height:80px;background:#3c3c3c;"></div>
<div style="position:absolute;left:1789px;top:1298px;width:48px;height:48px;background:#545454;"></div>
<svg style="position:absolute;left:1789px;top:1298px;" width="48" height="48" viewBox="0 0 48 48"><defs><radialGradient id="sph" cx="0.35" cy="0.3" r="0.75"><stop offset="0" stop-color="#6a6a6a"/><stop offset="0.6" stop-color="#3a3a3a"/><stop offset="1" stop-color="#1e1e1e"/></radialGradient></defs><circle cx="24" cy="24" r="22" fill="url(#sph)"/></svg>
<svg style="position:absolute;left:1775px;top:1347px;" width="12" height="14" viewBox="0 0 12 14"><path d="M1 0 L11 7 L1 14 Z" fill="#5a5a5a"/></svg>
<div class="t" style="left:1849px;top:1297.0px;font-size:19px;line-height:24px;color:#8a8a8a;">Lit (Material)</div>
<svg style="position:absolute;left:2473px;top:1301px;" width="16" height="16" viewBox="0 0 16 16"><circle cx="8" cy="8" r="7.5" fill="#a8a8a8"/><path d="M5.6 6.2 a2.4 2.4 0 1 1 3.4 2.2 c-0.8 0.4 -1 0.9 -1 1.8" fill="none" stroke="#3e3e3e" stroke-width="1.8"/><circle cx="8" cy="12.3" r="1.1" fill="#3e3e3e"/></svg>
<svg style="position:absolute;left:2497px;top:1300px;" width="19" height="18" viewBox="0 0 19 18"><path d="M1 7 H18 M1 12 H18" stroke="#a8a8a8" stroke-width="1.6"/><rect x="10" y="3" width="2" height="7" fill="#a8a8a8"/><rect x="6" y="9" width="2" height="7" fill="#a8a8a8"/></svg>
<svg style="position:absolute;left:2525px;top:1297px;" width="8" height="24" viewBox="0 0 8 24"><circle cx="4" cy="6" r="1.8" fill="#a8a8a8"/><circle cx="4" cy="12" r="1.8" fill="#a8a8a8"/><circle cx="4" cy="18" r="1.8" fill="#a8a8a8"/></svg>
<div class="t" style="left:1845px;top:1335.0px;font-size:19px;line-height:24px;color:#7e7e7e;">Shader</div>
<div style="position:absolute;left:1923px;top:1336px;width:465px;height:23px;background:#454545;border-radius:3px"></div>
<div class="t" style="left:1928px;top:1335.0px;font-size:19px;line-height:24px;color:#8e8e8e;">Universal Render Pipeline/Lit</div>
<svg style="position:absolute;left:2369.5px;top:1344.5px;" width="11" height="7" viewBox="0 0 11 7"><path d="M0 0 L11 0 L5.5 7 Z" fill="#8a8a8a"/></svg>
<div style="position:absolute;left:2397px;top:1333px;width:66px;height:23px;background:#454545;border-radius:3px"></div>
<div class="t" style="left:2406px;top:1332.0px;font-size:19px;line-height:24px;color:#8e8e8e;">Edit...</div>
<div style="position:absolute;left:2470px;top:1336px;width:62px;height:23px;background:#454545;border-radius:3px"></div>
<svg style="position:absolute;left:2484px;top:1340px;" width="16" height="14" viewBox="0 0 16 14"><circle cx="2" cy="2" r="1.3" fill="#8a8a8a"/><circle cx="4" cy="7" r="1.3" fill="#8a8a8a"/><circle cx="4" cy="12" r="1.3" fill="#8a8a8a"/><rect x="4" y="1.3" width="11" height="1.4" fill="#8a8a8a"/><rect x="6.5" y="6.3" width="8.5" height="1.4" fill="#8a8a8a"/><rect x="6.5" y="11.3" width="8.5" height="1.4" fill="#8a8a8a"/></svg>
<svg style="position:absolute;left:2513.5px;top:1344.5px;" width="11" height="7" viewBox="0 0 11 7"><path d="M0 0 L11 0 L5.5 7 Z" fill="#8a8a8a"/></svg>
<div style="position:absolute;left:1765px;top:1370px;width:776px;height:16px;background:#3a3a3a;"></div>
<div style="position:absolute;left:1765px;top:1386px;width:776px;height:2px;background:#1e1e1e;"></div>
<div style="position:absolute;left:1765px;top:1388px;width:776px;height:19px;background:#3a3a3a;"></div>
<div style="position:absolute;left:1983px;top:1402px;width:342px;height:5px;background:#5a5a5a;border-radius:3px 3px 0 0"></div>
</body></html>
